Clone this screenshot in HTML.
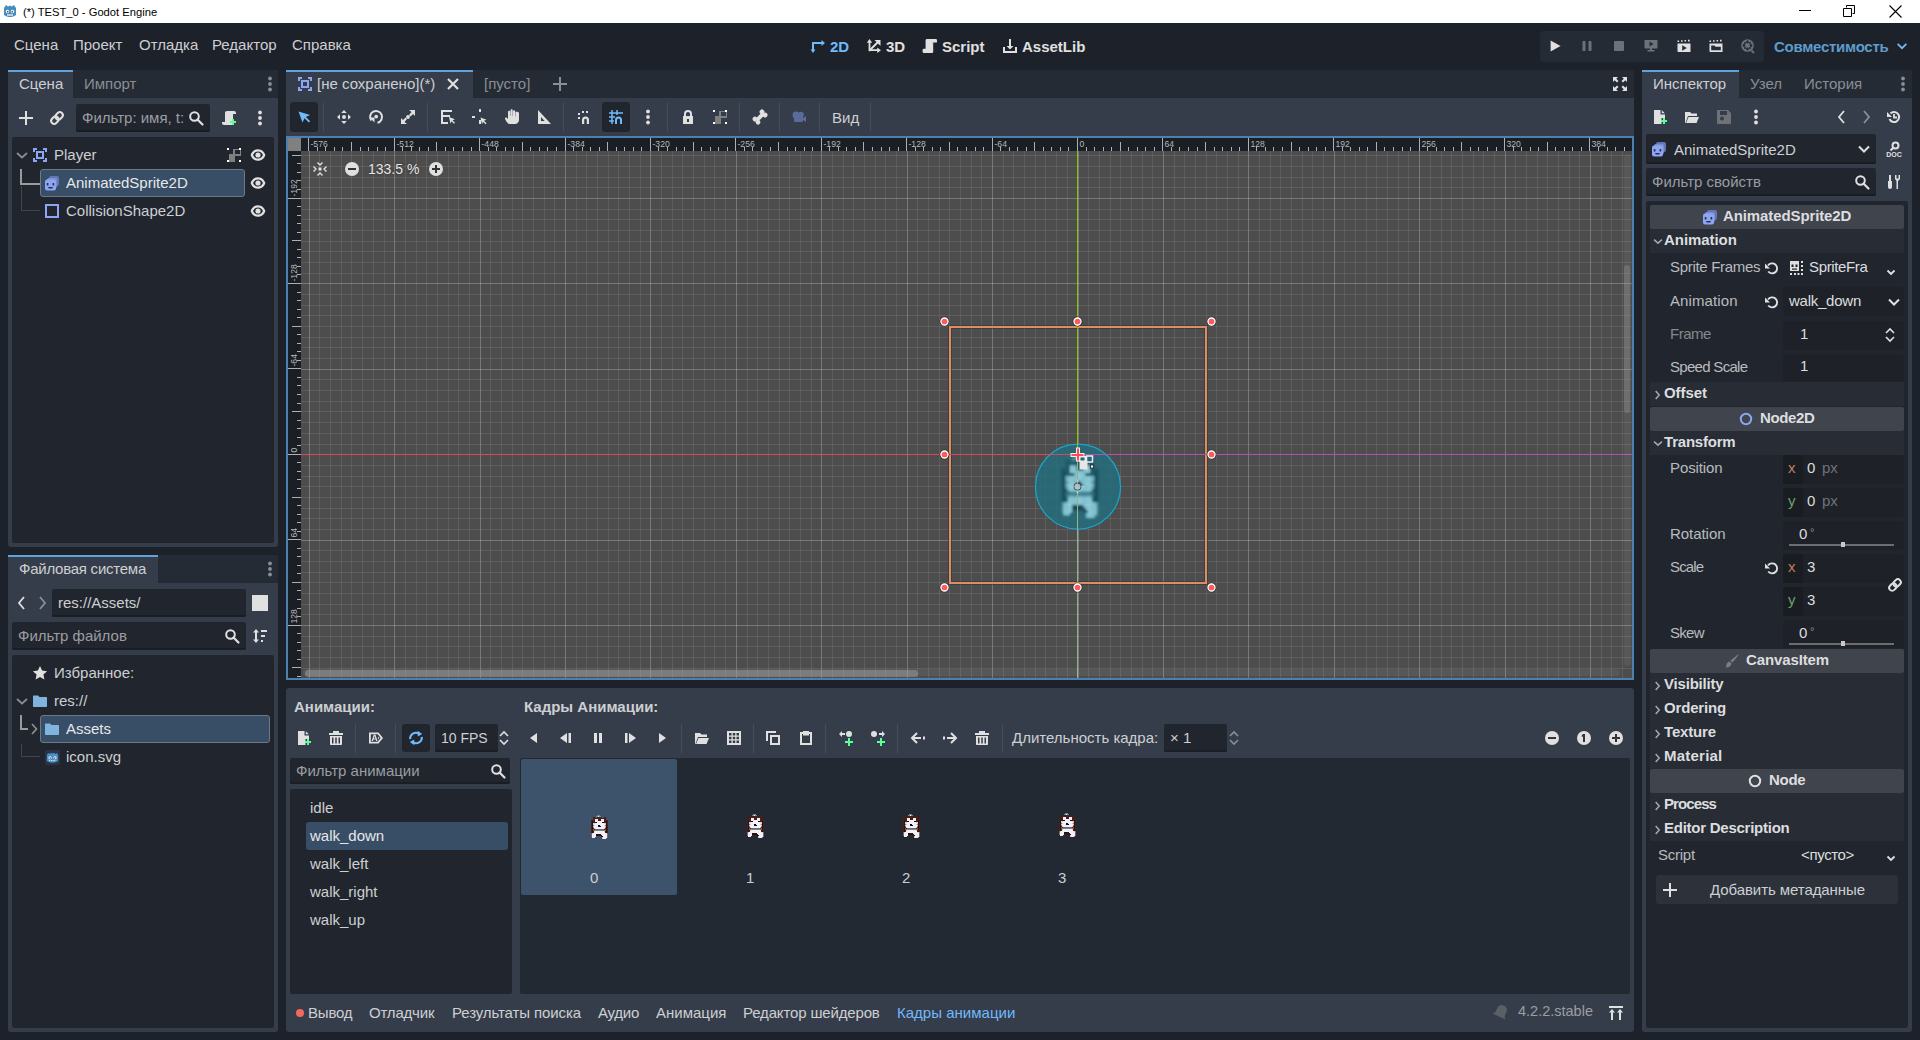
<!DOCTYPE html>
<html><head><meta charset="utf-8"><title>Godot</title>
<style>
html,body{margin:0;padding:0}
body{width:1920px;height:1040px;overflow:hidden;position:relative;background:#1d2129;font-family:"Liberation Sans",sans-serif;font-size:15px;color:#cdcfd2}
.a{position:absolute;box-sizing:border-box}
.t{position:absolute;white-space:nowrap;line-height:1}
svg.a{overflow:visible}
</style></head><body>
<div class="a" style="left:0px;top:0px;width:1920px;height:23px;background:#ffffff;"></div>
<div class="t" style="left:23px;top:6.52px;font-size:11.2px;color:#000;">(*) TEST_0 - Godot Engine</div>
<div class="a" style="left:1799px;top:10px;width:12px;height:1px;background:#000;"></div>
<svg class="a" style="left:1843px;top:5px;" width="12" height="12" viewBox="0 0 12 12"><path d="M3.5 2.5 V0.5 H11.5 V8.5 H9.5 M0.5 3.5 H8.5 V11.5 H0.5 Z" fill="none" stroke="#000" stroke-width="1"/></svg>
<svg class="a" style="left:1889px;top:5px;" width="13" height="13" viewBox="0 0 13 13"><path d="M0.5 0.5 L12.5 12.5 M12.5 0.5 L0.5 12.5" stroke="#000" stroke-width="1.1"/></svg>
<div class="t" style="left:14px;top:37.30px;font-size:15px;color:#cdcfd2;">Сцена</div>
<div class="t" style="left:73px;top:37.30px;font-size:15px;color:#cdcfd2;">Проект</div>
<div class="t" style="left:139px;top:37.30px;font-size:15px;color:#cdcfd2;">Отладка</div>
<div class="t" style="left:212px;top:37.30px;font-size:15px;color:#cdcfd2;">Редактор</div>
<div class="t" style="left:292px;top:37.30px;font-size:15px;color:#cdcfd2;">Справка</div>
<div class="t" style="left:830px;top:39.30px;font-size:15px;color:#70bafa;font-weight:700;">2D</div>
<div class="t" style="left:886px;top:39.30px;font-size:15px;color:#e0e0e0;font-weight:700;">3D</div>
<div class="t" style="left:942px;top:39.30px;font-size:15px;color:#e0e0e0;font-weight:700;">Script</div>
<div class="t" style="left:1022px;top:39.30px;font-size:15px;color:#e0e0e0;font-weight:700;">AssetLib</div>
<div class="a" style="left:1540px;top:31px;width:224px;height:31px;background:#252b34;border-radius:4px"></div>
<div class="t" style="left:1774px;top:39.30px;font-size:15px;color:#5d9ccb;font-weight:700;letter-spacing:-0.266px;">Совместимость</div>
<div class="a" style="left:8px;top:70px;width:270px;height:477px;background:#363d4a;border-radius:3px"></div>
<div class="a" style="left:73px;top:70px;width:205px;height:28px;background:#252b34;border-radius:0 3px 0 0"></div>
<div class="a" style="left:8px;top:70px;width:65px;height:2px;background:#5fa3da;"></div>
<div class="t" style="left:19px;top:76.30px;font-size:15px;color:#cdcfd2;">Сцена</div>
<div class="t" style="left:84px;top:76.30px;font-size:15px;color:#8a8e94;">Импорт</div>
<div class="a" style="left:76px;top:104px;width:134px;height:28px;background:#21262e;border-radius:2px;box-shadow:inset 0 -2px 0 #1a1d23"></div>
<div class="t" style="left:82px;top:110.30px;font-size:15px;color:#9a9da2;">Фильтр: имя, t:</div>
<div class="a" style="left:12px;top:137px;width:262px;height:406px;background:#21262e;border-radius:2px"></div>
<div class="t" style="left:54px;top:147.30px;font-size:15px;color:#cdcfd2;">Player</div>
<div class="a" style="left:40px;top:169px;width:205px;height:28px;background:#374e66;border:1px solid #6d7986;border-radius:3px"></div>
<div class="t" style="left:66px;top:175.30px;font-size:15px;color:#e6e7e9;">AnimatedSprite2D</div>
<div class="t" style="left:66px;top:203.30px;font-size:15px;color:#cdcfd2;">CollisionShape2D</div>
<div class="a" style="left:8px;top:555px;width:270px;height:477px;background:#363d4a;border-radius:3px"></div>
<div class="a" style="left:158px;top:555px;width:120px;height:28px;background:#252b34;border-radius:0 3px 0 0"></div>
<div class="a" style="left:8px;top:555px;width:150px;height:2px;background:#5fa3da;"></div>
<div class="t" style="left:19px;top:561.30px;font-size:15px;color:#cdcfd2;letter-spacing:-0.244px;">Файловая система</div>
<div class="a" style="left:52px;top:589px;width:194px;height:28px;background:#21262e;border-radius:2px;box-shadow:inset 0 -2px 0 #1a1d23"></div>
<div class="t" style="left:58px;top:595.30px;font-size:15px;color:#cdcfd2;">res://Assets/</div>
<div class="a" style="left:12px;top:622px;width:234px;height:28px;background:#21262e;border-radius:2px;box-shadow:inset 0 -2px 0 #1a1d23"></div>
<div class="t" style="left:18px;top:628.30px;font-size:15px;color:#9a9da2;">Фильтр файлов</div>
<div class="a" style="left:12px;top:655px;width:262px;height:373px;background:#21262e;border-radius:2px"></div>
<div class="t" style="left:54px;top:665.30px;font-size:15px;color:#cdcfd2;">Избранное:</div>
<div class="t" style="left:54px;top:693.30px;font-size:15px;color:#cdcfd2;">res://</div>
<div class="a" style="left:40px;top:715px;width:230px;height:28px;background:#374e66;border:1px solid #6d7986;border-radius:3px"></div>
<div class="t" style="left:66px;top:721.30px;font-size:15px;color:#e6e7e9;">Assets</div>
<div class="t" style="left:66px;top:749.30px;font-size:15px;color:#cdcfd2;">icon.svg</div>
<div class="a" style="left:286px;top:70px;width:1348px;height:610px;background:#363d4a;border-radius:3px"></div>
<div class="a" style="left:473px;top:70px;width:1161px;height:28px;background:#252b34;border-radius:0 3px 0 0"></div>
<div class="a" style="left:286px;top:70px;width:187px;height:2px;background:#5fa3da;"></div>
<div class="t" style="left:317px;top:76.30px;font-size:15px;color:#cdcfd2;">[не сохранено](*)</div>
<div class="t" style="left:484px;top:76.30px;font-size:15px;color:#8a8e94;">[пусто]</div>
<div class="a" style="left:286px;top:136px;width:1348px;height:544px;background:#4c80ae;"></div>
<div class="a" style="left:288px;top:138px;width:1344px;height:540px;background:#1a1e25;"></div>
<div class="a" style="left:301px;top:151px;width:1331px;height:527px;background:#4d4d4d;"></div>
<div class="a" style="left:288px;top:138px;width:13px;height:13px;background:#808080;"></div>
<svg class="a" style="left:301px;top:151px;overflow:hidden" width="1331" height="527"><line x1="8.5" y1="0" x2="8.5" y2="527" stroke="#fff" stroke-opacity="0.24" stroke-width="1"/><line x1="18.5" y1="0" x2="18.5" y2="527" stroke="#fff" stroke-opacity="0.09" stroke-width="1"/><line x1="29.5" y1="0" x2="29.5" y2="527" stroke="#fff" stroke-opacity="0.09" stroke-width="1"/><line x1="40.5" y1="0" x2="40.5" y2="527" stroke="#fff" stroke-opacity="0.09" stroke-width="1"/><line x1="50.5" y1="0" x2="50.5" y2="527" stroke="#fff" stroke-opacity="0.09" stroke-width="1"/><line x1="61.5" y1="0" x2="61.5" y2="527" stroke="#fff" stroke-opacity="0.09" stroke-width="1"/><line x1="72.5" y1="0" x2="72.5" y2="527" stroke="#fff" stroke-opacity="0.09" stroke-width="1"/><line x1="83.5" y1="0" x2="83.5" y2="527" stroke="#fff" stroke-opacity="0.09" stroke-width="1"/><line x1="93.5" y1="0" x2="93.5" y2="527" stroke="#fff" stroke-opacity="0.24" stroke-width="1"/><line x1="104.5" y1="0" x2="104.5" y2="527" stroke="#fff" stroke-opacity="0.09" stroke-width="1"/><line x1="115.5" y1="0" x2="115.5" y2="527" stroke="#fff" stroke-opacity="0.09" stroke-width="1"/><line x1="125.5" y1="0" x2="125.5" y2="527" stroke="#fff" stroke-opacity="0.09" stroke-width="1"/><line x1="136.5" y1="0" x2="136.5" y2="527" stroke="#fff" stroke-opacity="0.09" stroke-width="1"/><line x1="147.5" y1="0" x2="147.5" y2="527" stroke="#fff" stroke-opacity="0.09" stroke-width="1"/><line x1="157.5" y1="0" x2="157.5" y2="527" stroke="#fff" stroke-opacity="0.09" stroke-width="1"/><line x1="168.5" y1="0" x2="168.5" y2="527" stroke="#fff" stroke-opacity="0.09" stroke-width="1"/><line x1="179.5" y1="0" x2="179.5" y2="527" stroke="#fff" stroke-opacity="0.24" stroke-width="1"/><line x1="189.5" y1="0" x2="189.5" y2="527" stroke="#fff" stroke-opacity="0.09" stroke-width="1"/><line x1="200.5" y1="0" x2="200.5" y2="527" stroke="#fff" stroke-opacity="0.09" stroke-width="1"/><line x1="211.5" y1="0" x2="211.5" y2="527" stroke="#fff" stroke-opacity="0.09" stroke-width="1"/><line x1="221.5" y1="0" x2="221.5" y2="527" stroke="#fff" stroke-opacity="0.09" stroke-width="1"/><line x1="232.5" y1="0" x2="232.5" y2="527" stroke="#fff" stroke-opacity="0.09" stroke-width="1"/><line x1="243.5" y1="0" x2="243.5" y2="527" stroke="#fff" stroke-opacity="0.09" stroke-width="1"/><line x1="253.5" y1="0" x2="253.5" y2="527" stroke="#fff" stroke-opacity="0.09" stroke-width="1"/><line x1="264.5" y1="0" x2="264.5" y2="527" stroke="#fff" stroke-opacity="0.24" stroke-width="1"/><line x1="275.5" y1="0" x2="275.5" y2="527" stroke="#fff" stroke-opacity="0.09" stroke-width="1"/><line x1="285.5" y1="0" x2="285.5" y2="527" stroke="#fff" stroke-opacity="0.09" stroke-width="1"/><line x1="296.5" y1="0" x2="296.5" y2="527" stroke="#fff" stroke-opacity="0.09" stroke-width="1"/><line x1="307.5" y1="0" x2="307.5" y2="527" stroke="#fff" stroke-opacity="0.09" stroke-width="1"/><line x1="317.5" y1="0" x2="317.5" y2="527" stroke="#fff" stroke-opacity="0.09" stroke-width="1"/><line x1="328.5" y1="0" x2="328.5" y2="527" stroke="#fff" stroke-opacity="0.09" stroke-width="1"/><line x1="339.5" y1="0" x2="339.5" y2="527" stroke="#fff" stroke-opacity="0.09" stroke-width="1"/><line x1="349.5" y1="0" x2="349.5" y2="527" stroke="#fff" stroke-opacity="0.24" stroke-width="1"/><line x1="360.5" y1="0" x2="360.5" y2="527" stroke="#fff" stroke-opacity="0.09" stroke-width="1"/><line x1="371.5" y1="0" x2="371.5" y2="527" stroke="#fff" stroke-opacity="0.09" stroke-width="1"/><line x1="381.5" y1="0" x2="381.5" y2="527" stroke="#fff" stroke-opacity="0.09" stroke-width="1"/><line x1="392.5" y1="0" x2="392.5" y2="527" stroke="#fff" stroke-opacity="0.09" stroke-width="1"/><line x1="403.5" y1="0" x2="403.5" y2="527" stroke="#fff" stroke-opacity="0.09" stroke-width="1"/><line x1="413.5" y1="0" x2="413.5" y2="527" stroke="#fff" stroke-opacity="0.09" stroke-width="1"/><line x1="424.5" y1="0" x2="424.5" y2="527" stroke="#fff" stroke-opacity="0.09" stroke-width="1"/><line x1="435.5" y1="0" x2="435.5" y2="527" stroke="#fff" stroke-opacity="0.24" stroke-width="1"/><line x1="446.5" y1="0" x2="446.5" y2="527" stroke="#fff" stroke-opacity="0.09" stroke-width="1"/><line x1="456.5" y1="0" x2="456.5" y2="527" stroke="#fff" stroke-opacity="0.09" stroke-width="1"/><line x1="467.5" y1="0" x2="467.5" y2="527" stroke="#fff" stroke-opacity="0.09" stroke-width="1"/><line x1="478.5" y1="0" x2="478.5" y2="527" stroke="#fff" stroke-opacity="0.09" stroke-width="1"/><line x1="488.5" y1="0" x2="488.5" y2="527" stroke="#fff" stroke-opacity="0.09" stroke-width="1"/><line x1="499.5" y1="0" x2="499.5" y2="527" stroke="#fff" stroke-opacity="0.09" stroke-width="1"/><line x1="510.5" y1="0" x2="510.5" y2="527" stroke="#fff" stroke-opacity="0.09" stroke-width="1"/><line x1="520.5" y1="0" x2="520.5" y2="527" stroke="#fff" stroke-opacity="0.24" stroke-width="1"/><line x1="531.5" y1="0" x2="531.5" y2="527" stroke="#fff" stroke-opacity="0.09" stroke-width="1"/><line x1="542.5" y1="0" x2="542.5" y2="527" stroke="#fff" stroke-opacity="0.09" stroke-width="1"/><line x1="552.5" y1="0" x2="552.5" y2="527" stroke="#fff" stroke-opacity="0.09" stroke-width="1"/><line x1="563.5" y1="0" x2="563.5" y2="527" stroke="#fff" stroke-opacity="0.09" stroke-width="1"/><line x1="574.5" y1="0" x2="574.5" y2="527" stroke="#fff" stroke-opacity="0.09" stroke-width="1"/><line x1="584.5" y1="0" x2="584.5" y2="527" stroke="#fff" stroke-opacity="0.09" stroke-width="1"/><line x1="595.5" y1="0" x2="595.5" y2="527" stroke="#fff" stroke-opacity="0.09" stroke-width="1"/><line x1="606.5" y1="0" x2="606.5" y2="527" stroke="#fff" stroke-opacity="0.24" stroke-width="1"/><line x1="616.5" y1="0" x2="616.5" y2="527" stroke="#fff" stroke-opacity="0.09" stroke-width="1"/><line x1="627.5" y1="0" x2="627.5" y2="527" stroke="#fff" stroke-opacity="0.09" stroke-width="1"/><line x1="638.5" y1="0" x2="638.5" y2="527" stroke="#fff" stroke-opacity="0.09" stroke-width="1"/><line x1="648.5" y1="0" x2="648.5" y2="527" stroke="#fff" stroke-opacity="0.09" stroke-width="1"/><line x1="659.5" y1="0" x2="659.5" y2="527" stroke="#fff" stroke-opacity="0.09" stroke-width="1"/><line x1="670.5" y1="0" x2="670.5" y2="527" stroke="#fff" stroke-opacity="0.09" stroke-width="1"/><line x1="680.5" y1="0" x2="680.5" y2="527" stroke="#fff" stroke-opacity="0.09" stroke-width="1"/><line x1="691.5" y1="0" x2="691.5" y2="527" stroke="#fff" stroke-opacity="0.24" stroke-width="1"/><line x1="702.5" y1="0" x2="702.5" y2="527" stroke="#fff" stroke-opacity="0.09" stroke-width="1"/><line x1="712.5" y1="0" x2="712.5" y2="527" stroke="#fff" stroke-opacity="0.09" stroke-width="1"/><line x1="723.5" y1="0" x2="723.5" y2="527" stroke="#fff" stroke-opacity="0.09" stroke-width="1"/><line x1="734.5" y1="0" x2="734.5" y2="527" stroke="#fff" stroke-opacity="0.09" stroke-width="1"/><line x1="744.5" y1="0" x2="744.5" y2="527" stroke="#fff" stroke-opacity="0.09" stroke-width="1"/><line x1="755.5" y1="0" x2="755.5" y2="527" stroke="#fff" stroke-opacity="0.09" stroke-width="1"/><line x1="766.5" y1="0" x2="766.5" y2="527" stroke="#fff" stroke-opacity="0.09" stroke-width="1"/><line x1="777.5" y1="0" x2="777.5" y2="527" stroke="#fff" stroke-opacity="0.24" stroke-width="1"/><line x1="787.5" y1="0" x2="787.5" y2="527" stroke="#fff" stroke-opacity="0.09" stroke-width="1"/><line x1="798.5" y1="0" x2="798.5" y2="527" stroke="#fff" stroke-opacity="0.09" stroke-width="1"/><line x1="809.5" y1="0" x2="809.5" y2="527" stroke="#fff" stroke-opacity="0.09" stroke-width="1"/><line x1="819.5" y1="0" x2="819.5" y2="527" stroke="#fff" stroke-opacity="0.09" stroke-width="1"/><line x1="830.5" y1="0" x2="830.5" y2="527" stroke="#fff" stroke-opacity="0.09" stroke-width="1"/><line x1="841.5" y1="0" x2="841.5" y2="527" stroke="#fff" stroke-opacity="0.09" stroke-width="1"/><line x1="851.5" y1="0" x2="851.5" y2="527" stroke="#fff" stroke-opacity="0.09" stroke-width="1"/><line x1="862.5" y1="0" x2="862.5" y2="527" stroke="#fff" stroke-opacity="0.24" stroke-width="1"/><line x1="873.5" y1="0" x2="873.5" y2="527" stroke="#fff" stroke-opacity="0.09" stroke-width="1"/><line x1="883.5" y1="0" x2="883.5" y2="527" stroke="#fff" stroke-opacity="0.09" stroke-width="1"/><line x1="894.5" y1="0" x2="894.5" y2="527" stroke="#fff" stroke-opacity="0.09" stroke-width="1"/><line x1="905.5" y1="0" x2="905.5" y2="527" stroke="#fff" stroke-opacity="0.09" stroke-width="1"/><line x1="915.5" y1="0" x2="915.5" y2="527" stroke="#fff" stroke-opacity="0.09" stroke-width="1"/><line x1="926.5" y1="0" x2="926.5" y2="527" stroke="#fff" stroke-opacity="0.09" stroke-width="1"/><line x1="937.5" y1="0" x2="937.5" y2="527" stroke="#fff" stroke-opacity="0.09" stroke-width="1"/><line x1="947.5" y1="0" x2="947.5" y2="527" stroke="#fff" stroke-opacity="0.24" stroke-width="1"/><line x1="958.5" y1="0" x2="958.5" y2="527" stroke="#fff" stroke-opacity="0.09" stroke-width="1"/><line x1="969.5" y1="0" x2="969.5" y2="527" stroke="#fff" stroke-opacity="0.09" stroke-width="1"/><line x1="979.5" y1="0" x2="979.5" y2="527" stroke="#fff" stroke-opacity="0.09" stroke-width="1"/><line x1="990.5" y1="0" x2="990.5" y2="527" stroke="#fff" stroke-opacity="0.09" stroke-width="1"/><line x1="1001.5" y1="0" x2="1001.5" y2="527" stroke="#fff" stroke-opacity="0.09" stroke-width="1"/><line x1="1011.5" y1="0" x2="1011.5" y2="527" stroke="#fff" stroke-opacity="0.09" stroke-width="1"/><line x1="1022.5" y1="0" x2="1022.5" y2="527" stroke="#fff" stroke-opacity="0.09" stroke-width="1"/><line x1="1033.5" y1="0" x2="1033.5" y2="527" stroke="#fff" stroke-opacity="0.24" stroke-width="1"/><line x1="1043.5" y1="0" x2="1043.5" y2="527" stroke="#fff" stroke-opacity="0.09" stroke-width="1"/><line x1="1054.5" y1="0" x2="1054.5" y2="527" stroke="#fff" stroke-opacity="0.09" stroke-width="1"/><line x1="1065.5" y1="0" x2="1065.5" y2="527" stroke="#fff" stroke-opacity="0.09" stroke-width="1"/><line x1="1075.5" y1="0" x2="1075.5" y2="527" stroke="#fff" stroke-opacity="0.09" stroke-width="1"/><line x1="1086.5" y1="0" x2="1086.5" y2="527" stroke="#fff" stroke-opacity="0.09" stroke-width="1"/><line x1="1097.5" y1="0" x2="1097.5" y2="527" stroke="#fff" stroke-opacity="0.09" stroke-width="1"/><line x1="1107.5" y1="0" x2="1107.5" y2="527" stroke="#fff" stroke-opacity="0.09" stroke-width="1"/><line x1="1118.5" y1="0" x2="1118.5" y2="527" stroke="#fff" stroke-opacity="0.24" stroke-width="1"/><line x1="1129.5" y1="0" x2="1129.5" y2="527" stroke="#fff" stroke-opacity="0.09" stroke-width="1"/><line x1="1140.5" y1="0" x2="1140.5" y2="527" stroke="#fff" stroke-opacity="0.09" stroke-width="1"/><line x1="1150.5" y1="0" x2="1150.5" y2="527" stroke="#fff" stroke-opacity="0.09" stroke-width="1"/><line x1="1161.5" y1="0" x2="1161.5" y2="527" stroke="#fff" stroke-opacity="0.09" stroke-width="1"/><line x1="1172.5" y1="0" x2="1172.5" y2="527" stroke="#fff" stroke-opacity="0.09" stroke-width="1"/><line x1="1182.5" y1="0" x2="1182.5" y2="527" stroke="#fff" stroke-opacity="0.09" stroke-width="1"/><line x1="1193.5" y1="0" x2="1193.5" y2="527" stroke="#fff" stroke-opacity="0.09" stroke-width="1"/><line x1="1204.5" y1="0" x2="1204.5" y2="527" stroke="#fff" stroke-opacity="0.24" stroke-width="1"/><line x1="1214.5" y1="0" x2="1214.5" y2="527" stroke="#fff" stroke-opacity="0.09" stroke-width="1"/><line x1="1225.5" y1="0" x2="1225.5" y2="527" stroke="#fff" stroke-opacity="0.09" stroke-width="1"/><line x1="1236.5" y1="0" x2="1236.5" y2="527" stroke="#fff" stroke-opacity="0.09" stroke-width="1"/><line x1="1246.5" y1="0" x2="1246.5" y2="527" stroke="#fff" stroke-opacity="0.09" stroke-width="1"/><line x1="1257.5" y1="0" x2="1257.5" y2="527" stroke="#fff" stroke-opacity="0.09" stroke-width="1"/><line x1="1268.5" y1="0" x2="1268.5" y2="527" stroke="#fff" stroke-opacity="0.09" stroke-width="1"/><line x1="1278.5" y1="0" x2="1278.5" y2="527" stroke="#fff" stroke-opacity="0.09" stroke-width="1"/><line x1="1289.5" y1="0" x2="1289.5" y2="527" stroke="#fff" stroke-opacity="0.24" stroke-width="1"/><line x1="1300.5" y1="0" x2="1300.5" y2="527" stroke="#fff" stroke-opacity="0.09" stroke-width="1"/><line x1="1310.5" y1="0" x2="1310.5" y2="527" stroke="#fff" stroke-opacity="0.09" stroke-width="1"/><line x1="1321.5" y1="0" x2="1321.5" y2="527" stroke="#fff" stroke-opacity="0.09" stroke-width="1"/><line x1="0" y1="4.5" x2="1331" y2="4.5" stroke="#fff" stroke-opacity="0.09" stroke-width="1"/><line x1="0" y1="15.5" x2="1331" y2="15.5" stroke="#fff" stroke-opacity="0.09" stroke-width="1"/><line x1="0" y1="26.5" x2="1331" y2="26.5" stroke="#fff" stroke-opacity="0.09" stroke-width="1"/><line x1="0" y1="36.5" x2="1331" y2="36.5" stroke="#fff" stroke-opacity="0.09" stroke-width="1"/><line x1="0" y1="47.5" x2="1331" y2="47.5" stroke="#fff" stroke-opacity="0.24" stroke-width="1"/><line x1="0" y1="58.5" x2="1331" y2="58.5" stroke="#fff" stroke-opacity="0.09" stroke-width="1"/><line x1="0" y1="68.5" x2="1331" y2="68.5" stroke="#fff" stroke-opacity="0.09" stroke-width="1"/><line x1="0" y1="79.5" x2="1331" y2="79.5" stroke="#fff" stroke-opacity="0.09" stroke-width="1"/><line x1="0" y1="90.5" x2="1331" y2="90.5" stroke="#fff" stroke-opacity="0.09" stroke-width="1"/><line x1="0" y1="100.5" x2="1331" y2="100.5" stroke="#fff" stroke-opacity="0.09" stroke-width="1"/><line x1="0" y1="111.5" x2="1331" y2="111.5" stroke="#fff" stroke-opacity="0.09" stroke-width="1"/><line x1="0" y1="122.5" x2="1331" y2="122.5" stroke="#fff" stroke-opacity="0.09" stroke-width="1"/><line x1="0" y1="132.5" x2="1331" y2="132.5" stroke="#fff" stroke-opacity="0.24" stroke-width="1"/><line x1="0" y1="143.5" x2="1331" y2="143.5" stroke="#fff" stroke-opacity="0.09" stroke-width="1"/><line x1="0" y1="154.5" x2="1331" y2="154.5" stroke="#fff" stroke-opacity="0.09" stroke-width="1"/><line x1="0" y1="164.5" x2="1331" y2="164.5" stroke="#fff" stroke-opacity="0.09" stroke-width="1"/><line x1="0" y1="175.5" x2="1331" y2="175.5" stroke="#fff" stroke-opacity="0.09" stroke-width="1"/><line x1="0" y1="186.5" x2="1331" y2="186.5" stroke="#fff" stroke-opacity="0.09" stroke-width="1"/><line x1="0" y1="196.5" x2="1331" y2="196.5" stroke="#fff" stroke-opacity="0.09" stroke-width="1"/><line x1="0" y1="207.5" x2="1331" y2="207.5" stroke="#fff" stroke-opacity="0.09" stroke-width="1"/><line x1="0" y1="218.5" x2="1331" y2="218.5" stroke="#fff" stroke-opacity="0.24" stroke-width="1"/><line x1="0" y1="228.5" x2="1331" y2="228.5" stroke="#fff" stroke-opacity="0.09" stroke-width="1"/><line x1="0" y1="239.5" x2="1331" y2="239.5" stroke="#fff" stroke-opacity="0.09" stroke-width="1"/><line x1="0" y1="250.5" x2="1331" y2="250.5" stroke="#fff" stroke-opacity="0.09" stroke-width="1"/><line x1="0" y1="260.5" x2="1331" y2="260.5" stroke="#fff" stroke-opacity="0.09" stroke-width="1"/><line x1="0" y1="271.5" x2="1331" y2="271.5" stroke="#fff" stroke-opacity="0.09" stroke-width="1"/><line x1="0" y1="282.5" x2="1331" y2="282.5" stroke="#fff" stroke-opacity="0.09" stroke-width="1"/><line x1="0" y1="293.5" x2="1331" y2="293.5" stroke="#fff" stroke-opacity="0.09" stroke-width="1"/><line x1="0" y1="303.5" x2="1331" y2="303.5" stroke="#fff" stroke-opacity="0.24" stroke-width="1"/><line x1="0" y1="314.5" x2="1331" y2="314.5" stroke="#fff" stroke-opacity="0.09" stroke-width="1"/><line x1="0" y1="325.5" x2="1331" y2="325.5" stroke="#fff" stroke-opacity="0.09" stroke-width="1"/><line x1="0" y1="335.5" x2="1331" y2="335.5" stroke="#fff" stroke-opacity="0.09" stroke-width="1"/><line x1="0" y1="346.5" x2="1331" y2="346.5" stroke="#fff" stroke-opacity="0.09" stroke-width="1"/><line x1="0" y1="357.5" x2="1331" y2="357.5" stroke="#fff" stroke-opacity="0.09" stroke-width="1"/><line x1="0" y1="367.5" x2="1331" y2="367.5" stroke="#fff" stroke-opacity="0.09" stroke-width="1"/><line x1="0" y1="378.5" x2="1331" y2="378.5" stroke="#fff" stroke-opacity="0.09" stroke-width="1"/><line x1="0" y1="389.5" x2="1331" y2="389.5" stroke="#fff" stroke-opacity="0.24" stroke-width="1"/><line x1="0" y1="399.5" x2="1331" y2="399.5" stroke="#fff" stroke-opacity="0.09" stroke-width="1"/><line x1="0" y1="410.5" x2="1331" y2="410.5" stroke="#fff" stroke-opacity="0.09" stroke-width="1"/><line x1="0" y1="421.5" x2="1331" y2="421.5" stroke="#fff" stroke-opacity="0.09" stroke-width="1"/><line x1="0" y1="431.5" x2="1331" y2="431.5" stroke="#fff" stroke-opacity="0.09" stroke-width="1"/><line x1="0" y1="442.5" x2="1331" y2="442.5" stroke="#fff" stroke-opacity="0.09" stroke-width="1"/><line x1="0" y1="453.5" x2="1331" y2="453.5" stroke="#fff" stroke-opacity="0.09" stroke-width="1"/><line x1="0" y1="463.5" x2="1331" y2="463.5" stroke="#fff" stroke-opacity="0.09" stroke-width="1"/><line x1="0" y1="474.5" x2="1331" y2="474.5" stroke="#fff" stroke-opacity="0.24" stroke-width="1"/><line x1="0" y1="485.5" x2="1331" y2="485.5" stroke="#fff" stroke-opacity="0.09" stroke-width="1"/><line x1="0" y1="495.5" x2="1331" y2="495.5" stroke="#fff" stroke-opacity="0.09" stroke-width="1"/><line x1="0" y1="506.5" x2="1331" y2="506.5" stroke="#fff" stroke-opacity="0.09" stroke-width="1"/><line x1="0" y1="517.5" x2="1331" y2="517.5" stroke="#fff" stroke-opacity="0.09" stroke-width="1"/><rect x="649" y="176" width="256" height="256" fill="none" stroke="#263238" stroke-opacity="0.5" stroke-width="4"/><rect x="649" y="176" width="256" height="256" fill="none" stroke="#e08c5e" stroke-width="2"/><circle cx="777" cy="335.6" r="42.5" fill="#246d7d" fill-opacity="0.85" stroke="#1aa6cc" stroke-width="1.2"/><defs><filter id="bl" x="-20%" y="-20%" width="140%" height="140%"><feGaussianBlur stdDeviation="1.3"/></filter><clipPath id="cc"><circle cx="777" cy="335.6" r="42"/></clipPath></defs><g clip-path="url(#cc)"><g filter="url(#bl)" opacity="0.9"><g transform="translate(760,304) scale(2.2353,2.6250)"><rect x="6" y="0" width="1.05" height="1.05" fill="#5a9fb0"/><rect x="7" y="0" width="1.05" height="1.05" fill="#5a9fb0"/><rect x="8" y="0" width="1.05" height="1.05" fill="#5a9fb0"/><rect x="5" y="1" width="1.05" height="1.05" fill="#5a9fb0"/><rect x="6" y="1" width="1.05" height="1.05" fill="#5a9fb0"/><rect x="7" y="1" width="1.05" height="1.05" fill="#9ad8e6"/><rect x="8" y="1" width="1.05" height="1.05" fill="#5a9fb0"/><rect x="9" y="1" width="1.05" height="1.05" fill="#5a9fb0"/><rect x="2" y="2" width="1.05" height="1.05" fill="#1f5866"/><rect x="3" y="2" width="1.05" height="1.05" fill="#1f5866"/><rect x="6" y="2" width="1.05" height="1.05" fill="#1f5866"/><rect x="7" y="2" width="1.05" height="1.05" fill="#1f5866"/><rect x="8" y="2" width="1.05" height="1.05" fill="#1f5866"/><rect x="9" y="2" width="1.05" height="1.05" fill="#1f5866"/><rect x="13" y="2" width="1.05" height="1.05" fill="#1f5866"/><rect x="14" y="2" width="1.05" height="1.05" fill="#1f5866"/><rect x="2" y="3" width="1.05" height="1.05" fill="#1f5866"/><rect x="3" y="3" width="1.05" height="1.05" fill="#1f5866"/><rect x="4" y="3" width="1.05" height="1.05" fill="#1f5866"/><rect x="5" y="3" width="1.05" height="1.05" fill="#1f5866"/><rect x="6" y="3" width="1.05" height="1.05" fill="#1f5866"/><rect x="7" y="3" width="1.05" height="1.05" fill="#1f5866"/><rect x="8" y="3" width="1.05" height="1.05" fill="#1f5866"/><rect x="9" y="3" width="1.05" height="1.05" fill="#1f5866"/><rect x="10" y="3" width="1.05" height="1.05" fill="#1f5866"/><rect x="11" y="3" width="1.05" height="1.05" fill="#1f5866"/><rect x="12" y="3" width="1.05" height="1.05" fill="#1f5866"/><rect x="13" y="3" width="1.05" height="1.05" fill="#1f5866"/><rect x="14" y="3" width="1.05" height="1.05" fill="#1f5866"/><rect x="2" y="4" width="1.05" height="1.05" fill="#1f5866"/><rect x="3" y="4" width="1.05" height="1.05" fill="#1f5866"/><rect x="4" y="4" width="1.05" height="1.05" fill="#9ad8e6"/><rect x="5" y="4" width="1.05" height="1.05" fill="#9ad8e6"/><rect x="6" y="4" width="1.05" height="1.05" fill="#9ad8e6"/><rect x="7" y="4" width="1.05" height="1.05" fill="#1f5866"/><rect x="8" y="4" width="1.05" height="1.05" fill="#1f5866"/><rect x="9" y="4" width="1.05" height="1.05" fill="#1f5866"/><rect x="10" y="4" width="1.05" height="1.05" fill="#9ad8e6"/><rect x="11" y="4" width="1.05" height="1.05" fill="#9ad8e6"/><rect x="12" y="4" width="1.05" height="1.05" fill="#9ad8e6"/><rect x="13" y="4" width="1.05" height="1.05" fill="#1f5866"/><rect x="14" y="4" width="1.05" height="1.05" fill="#1f5866"/><rect x="0" y="5" width="1.05" height="1.05" fill="#1f5866"/><rect x="1" y="5" width="1.05" height="1.05" fill="#1f5866"/><rect x="2" y="5" width="1.05" height="1.05" fill="#1f5866"/><rect x="3" y="5" width="1.05" height="1.05" fill="#1f5866"/><rect x="4" y="5" width="1.05" height="1.05" fill="#9ad8e6"/><rect x="5" y="5" width="1.05" height="1.05" fill="#9ad8e6"/><rect x="6" y="5" width="1.05" height="1.05" fill="#9ad8e6"/><rect x="7" y="5" width="1.05" height="1.05" fill="#1f5866"/><rect x="8" y="5" width="1.05" height="1.05" fill="#1f5866"/><rect x="9" y="5" width="1.05" height="1.05" fill="#1f5866"/><rect x="10" y="5" width="1.05" height="1.05" fill="#9ad8e6"/><rect x="11" y="5" width="1.05" height="1.05" fill="#9ad8e6"/><rect x="12" y="5" width="1.05" height="1.05" fill="#9ad8e6"/><rect x="13" y="5" width="1.05" height="1.05" fill="#1f5866"/><rect x="14" y="5" width="1.05" height="1.05" fill="#1f5866"/><rect x="15" y="5" width="1.05" height="1.05" fill="#1f5866"/><rect x="16" y="5" width="1.05" height="1.05" fill="#1f5866"/><rect x="0" y="6" width="1.05" height="1.05" fill="#1f5866"/><rect x="1" y="6" width="1.05" height="1.05" fill="#17434e"/><rect x="2" y="6" width="1.05" height="1.05" fill="#1f5866"/><rect x="3" y="6" width="1.05" height="1.05" fill="#1f5866"/><rect x="4" y="6" width="1.05" height="1.05" fill="#9ad8e6"/><rect x="5" y="6" width="1.05" height="1.05" fill="#9ad8e6"/><rect x="6" y="6" width="1.05" height="1.05" fill="#9ad8e6"/><rect x="7" y="6" width="1.05" height="1.05" fill="#9ad8e6"/><rect x="8" y="6" width="1.05" height="1.05" fill="#9ad8e6"/><rect x="9" y="6" width="1.05" height="1.05" fill="#9ad8e6"/><rect x="10" y="6" width="1.05" height="1.05" fill="#9ad8e6"/><rect x="11" y="6" width="1.05" height="1.05" fill="#9ad8e6"/><rect x="12" y="6" width="1.05" height="1.05" fill="#9ad8e6"/><rect x="13" y="6" width="1.05" height="1.05" fill="#1f5866"/><rect x="14" y="6" width="1.05" height="1.05" fill="#1f5866"/><rect x="15" y="6" width="1.05" height="1.05" fill="#17434e"/><rect x="16" y="6" width="1.05" height="1.05" fill="#1f5866"/><rect x="0" y="7" width="1.05" height="1.05" fill="#1f5866"/><rect x="1" y="7" width="1.05" height="1.05" fill="#17434e"/><rect x="2" y="7" width="1.05" height="1.05" fill="#1f5866"/><rect x="3" y="7" width="1.05" height="1.05" fill="#1f5866"/><rect x="4" y="7" width="1.05" height="1.05" fill="#0e3a44"/><rect x="5" y="7" width="1.05" height="1.05" fill="#0e3a44"/><rect x="6" y="7" width="1.05" height="1.05" fill="#9ad8e6"/><rect x="7" y="7" width="1.05" height="1.05" fill="#9ad8e6"/><rect x="8" y="7" width="1.05" height="1.05" fill="#9ad8e6"/><rect x="9" y="7" width="1.05" height="1.05" fill="#9ad8e6"/><rect x="10" y="7" width="1.05" height="1.05" fill="#9ad8e6"/><rect x="11" y="7" width="1.05" height="1.05" fill="#0e3a44"/><rect x="12" y="7" width="1.05" height="1.05" fill="#0e3a44"/><rect x="13" y="7" width="1.05" height="1.05" fill="#1f5866"/><rect x="14" y="7" width="1.05" height="1.05" fill="#1f5866"/><rect x="15" y="7" width="1.05" height="1.05" fill="#17434e"/><rect x="16" y="7" width="1.05" height="1.05" fill="#1f5866"/><rect x="0" y="8" width="1.05" height="1.05" fill="#1f5866"/><rect x="1" y="8" width="1.05" height="1.05" fill="#17434e"/><rect x="2" y="8" width="1.05" height="1.05" fill="#7cc0d0"/><rect x="3" y="8" width="1.05" height="1.05" fill="#7cc0d0"/><rect x="4" y="8" width="1.05" height="1.05" fill="#9ad8e6"/><rect x="5" y="8" width="1.05" height="1.05" fill="#9ad8e6"/><rect x="6" y="8" width="1.05" height="1.05" fill="#9ad8e6"/><rect x="7" y="8" width="1.05" height="1.05" fill="#9ad8e6"/><rect x="8" y="8" width="1.05" height="1.05" fill="#9ad8e6"/><rect x="9" y="8" width="1.05" height="1.05" fill="#9ad8e6"/><rect x="10" y="8" width="1.05" height="1.05" fill="#9ad8e6"/><rect x="11" y="8" width="1.05" height="1.05" fill="#9ad8e6"/><rect x="12" y="8" width="1.05" height="1.05" fill="#9ad8e6"/><rect x="13" y="8" width="1.05" height="1.05" fill="#7cc0d0"/><rect x="14" y="8" width="1.05" height="1.05" fill="#7cc0d0"/><rect x="15" y="8" width="1.05" height="1.05" fill="#17434e"/><rect x="16" y="8" width="1.05" height="1.05" fill="#1f5866"/><rect x="0" y="9" width="1.05" height="1.05" fill="#1f5866"/><rect x="1" y="9" width="1.05" height="1.05" fill="#17434e"/><rect x="2" y="9" width="1.05" height="1.05" fill="#7cc0d0"/><rect x="3" y="9" width="1.05" height="1.05" fill="#9ad8e6"/><rect x="4" y="9" width="1.05" height="1.05" fill="#9ad8e6"/><rect x="5" y="9" width="1.05" height="1.05" fill="#9ad8e6"/><rect x="6" y="9" width="1.05" height="1.05" fill="#9ad8e6"/><rect x="7" y="9" width="1.05" height="1.05" fill="#9ad8e6"/><rect x="8" y="9" width="1.05" height="1.05" fill="#9ad8e6"/><rect x="9" y="9" width="1.05" height="1.05" fill="#9ad8e6"/><rect x="10" y="9" width="1.05" height="1.05" fill="#9ad8e6"/><rect x="11" y="9" width="1.05" height="1.05" fill="#9ad8e6"/><rect x="12" y="9" width="1.05" height="1.05" fill="#9ad8e6"/><rect x="13" y="9" width="1.05" height="1.05" fill="#9ad8e6"/><rect x="14" y="9" width="1.05" height="1.05" fill="#7cc0d0"/><rect x="15" y="9" width="1.05" height="1.05" fill="#17434e"/><rect x="16" y="9" width="1.05" height="1.05" fill="#1f5866"/><rect x="0" y="10" width="1.05" height="1.05" fill="#1f5866"/><rect x="1" y="10" width="1.05" height="1.05" fill="#17434e"/><rect x="2" y="10" width="1.05" height="1.05" fill="#5a9fb0"/><rect x="3" y="10" width="1.05" height="1.05" fill="#7cc0d0"/><rect x="4" y="10" width="1.05" height="1.05" fill="#9ad8e6"/><rect x="5" y="10" width="1.05" height="1.05" fill="#9ad8e6"/><rect x="6" y="10" width="1.05" height="1.05" fill="#9ad8e6"/><rect x="7" y="10" width="1.05" height="1.05" fill="#0e3a44"/><rect x="8" y="10" width="1.05" height="1.05" fill="#0e3a44"/><rect x="9" y="10" width="1.05" height="1.05" fill="#9ad8e6"/><rect x="10" y="10" width="1.05" height="1.05" fill="#9ad8e6"/><rect x="11" y="10" width="1.05" height="1.05" fill="#9ad8e6"/><rect x="12" y="10" width="1.05" height="1.05" fill="#9ad8e6"/><rect x="13" y="10" width="1.05" height="1.05" fill="#7cc0d0"/><rect x="14" y="10" width="1.05" height="1.05" fill="#5a9fb0"/><rect x="15" y="10" width="1.05" height="1.05" fill="#17434e"/><rect x="16" y="10" width="1.05" height="1.05" fill="#1f5866"/><rect x="0" y="11" width="1.05" height="1.05" fill="#1f5866"/><rect x="1" y="11" width="1.05" height="1.05" fill="#17434e"/><rect x="2" y="11" width="1.05" height="1.05" fill="#7cc0d0"/><rect x="3" y="11" width="1.05" height="1.05" fill="#9ad8e6"/><rect x="4" y="11" width="1.05" height="1.05" fill="#9ad8e6"/><rect x="5" y="11" width="1.05" height="1.05" fill="#9ad8e6"/><rect x="6" y="11" width="1.05" height="1.05" fill="#9ad8e6"/><rect x="7" y="11" width="1.05" height="1.05" fill="#0e3a44"/><rect x="8" y="11" width="1.05" height="1.05" fill="#0e3a44"/><rect x="9" y="11" width="1.05" height="1.05" fill="#0e3a44"/><rect x="10" y="11" width="1.05" height="1.05" fill="#9ad8e6"/><rect x="11" y="11" width="1.05" height="1.05" fill="#9ad8e6"/><rect x="12" y="11" width="1.05" height="1.05" fill="#9ad8e6"/><rect x="13" y="11" width="1.05" height="1.05" fill="#9ad8e6"/><rect x="14" y="11" width="1.05" height="1.05" fill="#7cc0d0"/><rect x="15" y="11" width="1.05" height="1.05" fill="#17434e"/><rect x="16" y="11" width="1.05" height="1.05" fill="#1f5866"/><rect x="0" y="12" width="1.05" height="1.05" fill="#1f5866"/><rect x="1" y="12" width="1.05" height="1.05" fill="#17434e"/><rect x="2" y="12" width="1.05" height="1.05" fill="#5a9fb0"/><rect x="3" y="12" width="1.05" height="1.05" fill="#9ad8e6"/><rect x="4" y="12" width="1.05" height="1.05" fill="#9ad8e6"/><rect x="5" y="12" width="1.05" height="1.05" fill="#9ad8e6"/><rect x="6" y="12" width="1.05" height="1.05" fill="#9ad8e6"/><rect x="7" y="12" width="1.05" height="1.05" fill="#9ad8e6"/><rect x="8" y="12" width="1.05" height="1.05" fill="#9ad8e6"/><rect x="9" y="12" width="1.05" height="1.05" fill="#9ad8e6"/><rect x="10" y="12" width="1.05" height="1.05" fill="#9ad8e6"/><rect x="11" y="12" width="1.05" height="1.05" fill="#9ad8e6"/><rect x="12" y="12" width="1.05" height="1.05" fill="#9ad8e6"/><rect x="13" y="12" width="1.05" height="1.05" fill="#9ad8e6"/><rect x="14" y="12" width="1.05" height="1.05" fill="#5a9fb0"/><rect x="15" y="12" width="1.05" height="1.05" fill="#17434e"/><rect x="16" y="12" width="1.05" height="1.05" fill="#1f5866"/><rect x="0" y="13" width="1.05" height="1.05" fill="#1f5866"/><rect x="1" y="13" width="1.05" height="1.05" fill="#17434e"/><rect x="2" y="13" width="1.05" height="1.05" fill="#1f5866"/><rect x="3" y="13" width="1.05" height="1.05" fill="#7cc0d0"/><rect x="4" y="13" width="1.05" height="1.05" fill="#9ad8e6"/><rect x="5" y="13" width="1.05" height="1.05" fill="#9ad8e6"/><rect x="6" y="13" width="1.05" height="1.05" fill="#9ad8e6"/><rect x="7" y="13" width="1.05" height="1.05" fill="#9ad8e6"/><rect x="8" y="13" width="1.05" height="1.05" fill="#9ad8e6"/><rect x="9" y="13" width="1.05" height="1.05" fill="#9ad8e6"/><rect x="10" y="13" width="1.05" height="1.05" fill="#9ad8e6"/><rect x="11" y="13" width="1.05" height="1.05" fill="#9ad8e6"/><rect x="12" y="13" width="1.05" height="1.05" fill="#9ad8e6"/><rect x="13" y="13" width="1.05" height="1.05" fill="#7cc0d0"/><rect x="14" y="13" width="1.05" height="1.05" fill="#1f5866"/><rect x="15" y="13" width="1.05" height="1.05" fill="#17434e"/><rect x="16" y="13" width="1.05" height="1.05" fill="#1f5866"/><rect x="0" y="14" width="1.05" height="1.05" fill="#1f5866"/><rect x="1" y="14" width="1.05" height="1.05" fill="#17434e"/><rect x="2" y="14" width="1.05" height="1.05" fill="#357080"/><rect x="3" y="14" width="1.05" height="1.05" fill="#1f5866"/><rect x="4" y="14" width="1.05" height="1.05" fill="#3f7f8e"/><rect x="5" y="14" width="1.05" height="1.05" fill="#3f7f8e"/><rect x="6" y="14" width="1.05" height="1.05" fill="#3f7f8e"/><rect x="7" y="14" width="1.05" height="1.05" fill="#3f7f8e"/><rect x="8" y="14" width="1.05" height="1.05" fill="#3f7f8e"/><rect x="9" y="14" width="1.05" height="1.05" fill="#3f7f8e"/><rect x="10" y="14" width="1.05" height="1.05" fill="#3f7f8e"/><rect x="11" y="14" width="1.05" height="1.05" fill="#3f7f8e"/><rect x="12" y="14" width="1.05" height="1.05" fill="#3f7f8e"/><rect x="13" y="14" width="1.05" height="1.05" fill="#1f5866"/><rect x="14" y="14" width="1.05" height="1.05" fill="#357080"/><rect x="15" y="14" width="1.05" height="1.05" fill="#17434e"/><rect x="16" y="14" width="1.05" height="1.05" fill="#1f5866"/><rect x="0" y="15" width="1.05" height="1.05" fill="#1f5866"/><rect x="1" y="15" width="1.05" height="1.05" fill="#17434e"/><rect x="2" y="15" width="1.05" height="1.05" fill="#357080"/><rect x="3" y="15" width="1.05" height="1.05" fill="#5a9fb0"/><rect x="4" y="15" width="1.05" height="1.05" fill="#5a9fb0"/><rect x="5" y="15" width="1.05" height="1.05" fill="#5a9fb0"/><rect x="6" y="15" width="1.05" height="1.05" fill="#5a9fb0"/><rect x="7" y="15" width="1.05" height="1.05" fill="#5a9fb0"/><rect x="8" y="15" width="1.05" height="1.05" fill="#5a9fb0"/><rect x="9" y="15" width="1.05" height="1.05" fill="#5a9fb0"/><rect x="10" y="15" width="1.05" height="1.05" fill="#5a9fb0"/><rect x="11" y="15" width="1.05" height="1.05" fill="#5a9fb0"/><rect x="12" y="15" width="1.05" height="1.05" fill="#5a9fb0"/><rect x="13" y="15" width="1.05" height="1.05" fill="#5a9fb0"/><rect x="14" y="15" width="1.05" height="1.05" fill="#357080"/><rect x="15" y="15" width="1.05" height="1.05" fill="#17434e"/><rect x="16" y="15" width="1.05" height="1.05" fill="#1f5866"/><rect x="0" y="16" width="1.05" height="1.05" fill="#1f5866"/><rect x="1" y="16" width="1.05" height="1.05" fill="#17434e"/><rect x="2" y="16" width="1.05" height="1.05" fill="#1f5866"/><rect x="3" y="16" width="1.05" height="1.05" fill="#7cc0d0"/><rect x="4" y="16" width="1.05" height="1.05" fill="#9ad8e6"/><rect x="5" y="16" width="1.05" height="1.05" fill="#9ad8e6"/><rect x="6" y="16" width="1.05" height="1.05" fill="#9ad8e6"/><rect x="7" y="16" width="1.05" height="1.05" fill="#9ad8e6"/><rect x="8" y="16" width="1.05" height="1.05" fill="#9ad8e6"/><rect x="9" y="16" width="1.05" height="1.05" fill="#9ad8e6"/><rect x="10" y="16" width="1.05" height="1.05" fill="#9ad8e6"/><rect x="11" y="16" width="1.05" height="1.05" fill="#9ad8e6"/><rect x="12" y="16" width="1.05" height="1.05" fill="#9ad8e6"/><rect x="13" y="16" width="1.05" height="1.05" fill="#7cc0d0"/><rect x="14" y="16" width="1.05" height="1.05" fill="#1f5866"/><rect x="15" y="16" width="1.05" height="1.05" fill="#17434e"/><rect x="16" y="16" width="1.05" height="1.05" fill="#1f5866"/><rect x="0" y="17" width="1.05" height="1.05" fill="#1f5866"/><rect x="1" y="17" width="1.05" height="1.05" fill="#17434e"/><rect x="2" y="17" width="1.05" height="1.05" fill="#1f5866"/><rect x="3" y="17" width="1.05" height="1.05" fill="#9ad8e6"/><rect x="4" y="17" width="1.05" height="1.05" fill="#9ad8e6"/><rect x="5" y="17" width="1.05" height="1.05" fill="#9ad8e6"/><rect x="6" y="17" width="1.05" height="1.05" fill="#9ad8e6"/><rect x="7" y="17" width="1.05" height="1.05" fill="#9ad8e6"/><rect x="8" y="17" width="1.05" height="1.05" fill="#9ad8e6"/><rect x="9" y="17" width="1.05" height="1.05" fill="#9ad8e6"/><rect x="10" y="17" width="1.05" height="1.05" fill="#9ad8e6"/><rect x="11" y="17" width="1.05" height="1.05" fill="#9ad8e6"/><rect x="12" y="17" width="1.05" height="1.05" fill="#9ad8e6"/><rect x="13" y="17" width="1.05" height="1.05" fill="#9ad8e6"/><rect x="14" y="17" width="1.05" height="1.05" fill="#1f5866"/><rect x="15" y="17" width="1.05" height="1.05" fill="#17434e"/><rect x="16" y="17" width="1.05" height="1.05" fill="#1f5866"/><rect x="0" y="18" width="1.05" height="1.05" fill="#3f7f8e"/><rect x="1" y="18" width="1.05" height="1.05" fill="#7cc0d0"/><rect x="2" y="18" width="1.05" height="1.05" fill="#9ad8e6"/><rect x="3" y="18" width="1.05" height="1.05" fill="#9ad8e6"/><rect x="4" y="18" width="1.05" height="1.05" fill="#9ad8e6"/><rect x="5" y="18" width="1.05" height="1.05" fill="#9ad8e6"/><rect x="6" y="18" width="1.05" height="1.05" fill="#9ad8e6"/><rect x="7" y="18" width="1.05" height="1.05" fill="#9ad8e6"/><rect x="8" y="18" width="1.05" height="1.05" fill="#9ad8e6"/><rect x="9" y="18" width="1.05" height="1.05" fill="#9ad8e6"/><rect x="10" y="18" width="1.05" height="1.05" fill="#9ad8e6"/><rect x="11" y="18" width="1.05" height="1.05" fill="#9ad8e6"/><rect x="12" y="18" width="1.05" height="1.05" fill="#9ad8e6"/><rect x="13" y="18" width="1.05" height="1.05" fill="#9ad8e6"/><rect x="14" y="18" width="1.05" height="1.05" fill="#9ad8e6"/><rect x="15" y="18" width="1.05" height="1.05" fill="#7cc0d0"/><rect x="16" y="18" width="1.05" height="1.05" fill="#3f7f8e"/><rect x="0" y="19" width="1.05" height="1.05" fill="#3f7f8e"/><rect x="1" y="19" width="1.05" height="1.05" fill="#9ad8e6"/><rect x="2" y="19" width="1.05" height="1.05" fill="#9ad8e6"/><rect x="3" y="19" width="1.05" height="1.05" fill="#9ad8e6"/><rect x="4" y="19" width="1.05" height="1.05" fill="#9ad8e6"/><rect x="5" y="19" width="1.05" height="1.05" fill="#17434e"/><rect x="6" y="19" width="1.05" height="1.05" fill="#17434e"/><rect x="7" y="19" width="1.05" height="1.05" fill="#17434e"/><rect x="8" y="19" width="1.05" height="1.05" fill="#17434e"/><rect x="9" y="19" width="1.05" height="1.05" fill="#17434e"/><rect x="10" y="19" width="1.05" height="1.05" fill="#9ad8e6"/><rect x="11" y="19" width="1.05" height="1.05" fill="#9ad8e6"/><rect x="12" y="19" width="1.05" height="1.05" fill="#9ad8e6"/><rect x="13" y="19" width="1.05" height="1.05" fill="#9ad8e6"/><rect x="14" y="19" width="1.05" height="1.05" fill="#9ad8e6"/><rect x="15" y="19" width="1.05" height="1.05" fill="#9ad8e6"/><rect x="16" y="19" width="1.05" height="1.05" fill="#3f7f8e"/><rect x="0" y="20" width="1.05" height="1.05" fill="#3f7f8e"/><rect x="1" y="20" width="1.05" height="1.05" fill="#9ad8e6"/><rect x="2" y="20" width="1.05" height="1.05" fill="#9ad8e6"/><rect x="3" y="20" width="1.05" height="1.05" fill="#9ad8e6"/><rect x="4" y="20" width="1.05" height="1.05" fill="#9ad8e6"/><rect x="5" y="20" width="1.05" height="1.05" fill="#17434e"/><rect x="6" y="20" width="1.05" height="1.05" fill="#17434e"/><rect x="7" y="20" width="1.05" height="1.05" fill="#17434e"/><rect x="8" y="20" width="1.05" height="1.05" fill="#17434e"/><rect x="9" y="20" width="1.05" height="1.05" fill="#17434e"/><rect x="10" y="20" width="1.05" height="1.05" fill="#17434e"/><rect x="11" y="20" width="1.05" height="1.05" fill="#9ad8e6"/><rect x="12" y="20" width="1.05" height="1.05" fill="#9ad8e6"/><rect x="13" y="20" width="1.05" height="1.05" fill="#9ad8e6"/><rect x="14" y="20" width="1.05" height="1.05" fill="#9ad8e6"/><rect x="15" y="20" width="1.05" height="1.05" fill="#9ad8e6"/><rect x="16" y="20" width="1.05" height="1.05" fill="#3f7f8e"/><rect x="0" y="21" width="1.05" height="1.05" fill="#3f7f8e"/><rect x="1" y="21" width="1.05" height="1.05" fill="#9ad8e6"/><rect x="2" y="21" width="1.05" height="1.05" fill="#9ad8e6"/><rect x="3" y="21" width="1.05" height="1.05" fill="#9ad8e6"/><rect x="4" y="21" width="1.05" height="1.05" fill="#9ad8e6"/><rect x="10" y="21" width="1.05" height="1.05" fill="#17434e"/><rect x="11" y="21" width="1.05" height="1.05" fill="#17434e"/><rect x="12" y="21" width="1.05" height="1.05" fill="#9ad8e6"/><rect x="13" y="21" width="1.05" height="1.05" fill="#9ad8e6"/><rect x="14" y="21" width="1.05" height="1.05" fill="#9ad8e6"/><rect x="15" y="21" width="1.05" height="1.05" fill="#9ad8e6"/><rect x="16" y="21" width="1.05" height="1.05" fill="#3f7f8e"/><rect x="1" y="22" width="1.05" height="1.05" fill="#9ad8e6"/><rect x="2" y="22" width="1.05" height="1.05" fill="#9ad8e6"/><rect x="3" y="22" width="1.05" height="1.05" fill="#9ad8e6"/><rect x="11" y="22" width="1.05" height="1.05" fill="#7cc0d0"/><rect x="12" y="22" width="1.05" height="1.05" fill="#9ad8e6"/><rect x="13" y="22" width="1.05" height="1.05" fill="#9ad8e6"/><rect x="14" y="22" width="1.05" height="1.05" fill="#9ad8e6"/><rect x="15" y="22" width="1.05" height="1.05" fill="#9ad8e6"/><rect x="16" y="22" width="1.05" height="1.05" fill="#3f7f8e"/><rect x="11" y="23" width="1.05" height="1.05" fill="#7cc0d0"/><rect x="12" y="23" width="1.05" height="1.05" fill="#9ad8e6"/><rect x="13" y="23" width="1.05" height="1.05" fill="#9ad8e6"/><rect x="14" y="23" width="1.05" height="1.05" fill="#9ad8e6"/><rect x="15" y="23" width="1.05" height="1.05" fill="#3f7f8e"/></g></g></g><line x1="776.5" y1="0" x2="776.5" y2="303.5" stroke="#86c20f" stroke-width="1"/><line x1="776.5" y1="303.5" x2="776.5" y2="527" stroke="#8fb38f" stroke-width="1"/><line x1="0" y1="303.5" x2="776.5" y2="303.5" stroke="#d8485c" stroke-width="1"/><line x1="776.5" y1="303.5" x2="1331" y2="303.5" stroke="#b052b0" stroke-width="1"/><g transform="translate(776.5,335.6)"><circle r="3.6" fill="#b8c8cc" fill-opacity="0.8" stroke="#2a3a40" stroke-width="0.8"/><rect x="-7" y="-0.8" width="3" height="1.6" fill="#b8c8cc"/><rect x="4" y="-0.8" width="3" height="1.6" fill="#b8c8cc"/><rect x="-0.8" y="-7" width="1.6" height="3" fill="#b8c8cc"/><rect x="-0.8" y="4" width="1.6" height="3" fill="#b8c8cc"/></g><g transform="translate(776.5,303.5)"><rect x="-1.5" y="-7" width="4" height="14" fill="#eee"/><rect x="-7" y="-1.5" width="14" height="4" fill="#eee"/><rect x="-0.5" y="-6" width="2" height="12" fill="#ff4a5a"/><rect x="-6" y="-0.5" width="12" height="2" fill="#ff4a5a"/><rect x="1.5" y="1.5" width="7" height="6" fill="#eee"/><rect x="3" y="3" width="4" height="3" fill="#2a6070"/><rect x="9" y="1.5" width="6" height="6" fill="none" stroke="#eee" stroke-width="1.5"/><rect x="2" y="7" width="8" height="8" fill="#e6e6e6"/><rect x="13" y="10.5" width="3" height="3" fill="#fff" stroke="#222" stroke-width="0.8"/></g><circle cx="643.5" cy="170.5" r="4.6" fill="none" stroke="#222" stroke-opacity="0.6" stroke-width="1"/><circle cx="643.5" cy="170.5" r="3.5" fill="#ff5a5a" stroke="#fff" stroke-width="1.3"/><circle cx="643.5" cy="303.5" r="4.6" fill="none" stroke="#222" stroke-opacity="0.6" stroke-width="1"/><circle cx="643.5" cy="303.5" r="3.5" fill="#ff5a5a" stroke="#fff" stroke-width="1.3"/><circle cx="643.5" cy="436.5" r="4.6" fill="none" stroke="#222" stroke-opacity="0.6" stroke-width="1"/><circle cx="643.5" cy="436.5" r="3.5" fill="#ff5a5a" stroke="#fff" stroke-width="1.3"/><circle cx="776.5" cy="170.5" r="4.6" fill="none" stroke="#222" stroke-opacity="0.6" stroke-width="1"/><circle cx="776.5" cy="170.5" r="3.5" fill="#ff5a5a" stroke="#fff" stroke-width="1.3"/><circle cx="776.5" cy="436.5" r="4.6" fill="none" stroke="#222" stroke-opacity="0.6" stroke-width="1"/><circle cx="776.5" cy="436.5" r="3.5" fill="#ff5a5a" stroke="#fff" stroke-width="1.3"/><circle cx="910.5" cy="170.5" r="4.6" fill="none" stroke="#222" stroke-opacity="0.6" stroke-width="1"/><circle cx="910.5" cy="170.5" r="3.5" fill="#ff5a5a" stroke="#fff" stroke-width="1.3"/><circle cx="910.5" cy="303.5" r="4.6" fill="none" stroke="#222" stroke-opacity="0.6" stroke-width="1"/><circle cx="910.5" cy="303.5" r="3.5" fill="#ff5a5a" stroke="#fff" stroke-width="1.3"/><circle cx="910.5" cy="436.5" r="4.6" fill="none" stroke="#222" stroke-opacity="0.6" stroke-width="1"/><circle cx="910.5" cy="436.5" r="3.5" fill="#ff5a5a" stroke="#fff" stroke-width="1.3"/><rect x="2" y="518" width="1317" height="7" rx="3.5" fill="#ffffff" fill-opacity="0.06"/><rect x="1323" y="3" width="7" height="512" rx="3.5" fill="#ffffff" fill-opacity="0.06"/><rect x="4" y="519" width="613" height="7" rx="3.5" fill="#9a9a9a" fill-opacity="0.55"/><rect x="1323" y="114" width="6" height="148" rx="3" fill="#9a9a9a" fill-opacity="0.35"/></svg>
<svg class="a" style="left:288px;top:138px;overflow:hidden" width="1344" height="13"><line x1="20.5" y1="0" x2="20.5" y2="13" stroke="#b0b0b0" stroke-width="1"/><text x="22.5" y="8.6" font-size="8.6" fill="#b8b8b8" font-family="Liberation Sans">-576</text><line x1="29.5" y1="9" x2="29.5" y2="13" stroke="#b0b0b0" stroke-width="1"/><line x1="37.5" y1="9" x2="37.5" y2="13" stroke="#b0b0b0" stroke-width="1"/><line x1="46.5" y1="9" x2="46.5" y2="13" stroke="#b0b0b0" stroke-width="1"/><line x1="54.5" y1="9" x2="54.5" y2="13" stroke="#b0b0b0" stroke-width="1"/><line x1="63.5" y1="4" x2="63.5" y2="13" stroke="#b0b0b0" stroke-width="1"/><line x1="72.5" y1="9" x2="72.5" y2="13" stroke="#b0b0b0" stroke-width="1"/><line x1="80.5" y1="9" x2="80.5" y2="13" stroke="#b0b0b0" stroke-width="1"/><line x1="89.5" y1="9" x2="89.5" y2="13" stroke="#b0b0b0" stroke-width="1"/><line x1="97.5" y1="9" x2="97.5" y2="13" stroke="#b0b0b0" stroke-width="1"/><line x1="106.5" y1="0" x2="106.5" y2="13" stroke="#b0b0b0" stroke-width="1"/><text x="108.5" y="8.6" font-size="8.6" fill="#b8b8b8" font-family="Liberation Sans">-512</text><line x1="114.5" y1="9" x2="114.5" y2="13" stroke="#b0b0b0" stroke-width="1"/><line x1="123.5" y1="9" x2="123.5" y2="13" stroke="#b0b0b0" stroke-width="1"/><line x1="131.5" y1="9" x2="131.5" y2="13" stroke="#b0b0b0" stroke-width="1"/><line x1="140.5" y1="9" x2="140.5" y2="13" stroke="#b0b0b0" stroke-width="1"/><line x1="148.5" y1="4" x2="148.5" y2="13" stroke="#b0b0b0" stroke-width="1"/><line x1="157.5" y1="9" x2="157.5" y2="13" stroke="#b0b0b0" stroke-width="1"/><line x1="165.5" y1="9" x2="165.5" y2="13" stroke="#b0b0b0" stroke-width="1"/><line x1="174.5" y1="9" x2="174.5" y2="13" stroke="#b0b0b0" stroke-width="1"/><line x1="183.5" y1="9" x2="183.5" y2="13" stroke="#b0b0b0" stroke-width="1"/><line x1="191.5" y1="0" x2="191.5" y2="13" stroke="#b0b0b0" stroke-width="1"/><text x="193.5" y="8.6" font-size="8.6" fill="#b8b8b8" font-family="Liberation Sans">-448</text><line x1="200.5" y1="9" x2="200.5" y2="13" stroke="#b0b0b0" stroke-width="1"/><line x1="208.5" y1="9" x2="208.5" y2="13" stroke="#b0b0b0" stroke-width="1"/><line x1="217.5" y1="9" x2="217.5" y2="13" stroke="#b0b0b0" stroke-width="1"/><line x1="225.5" y1="9" x2="225.5" y2="13" stroke="#b0b0b0" stroke-width="1"/><line x1="234.5" y1="4" x2="234.5" y2="13" stroke="#b0b0b0" stroke-width="1"/><line x1="242.5" y1="9" x2="242.5" y2="13" stroke="#b0b0b0" stroke-width="1"/><line x1="251.5" y1="9" x2="251.5" y2="13" stroke="#b0b0b0" stroke-width="1"/><line x1="259.5" y1="9" x2="259.5" y2="13" stroke="#b0b0b0" stroke-width="1"/><line x1="268.5" y1="9" x2="268.5" y2="13" stroke="#b0b0b0" stroke-width="1"/><line x1="277.5" y1="0" x2="277.5" y2="13" stroke="#b0b0b0" stroke-width="1"/><text x="279.5" y="8.6" font-size="8.6" fill="#b8b8b8" font-family="Liberation Sans">-384</text><line x1="285.5" y1="9" x2="285.5" y2="13" stroke="#b0b0b0" stroke-width="1"/><line x1="294.5" y1="9" x2="294.5" y2="13" stroke="#b0b0b0" stroke-width="1"/><line x1="302.5" y1="9" x2="302.5" y2="13" stroke="#b0b0b0" stroke-width="1"/><line x1="311.5" y1="9" x2="311.5" y2="13" stroke="#b0b0b0" stroke-width="1"/><line x1="319.5" y1="4" x2="319.5" y2="13" stroke="#b0b0b0" stroke-width="1"/><line x1="328.5" y1="9" x2="328.5" y2="13" stroke="#b0b0b0" stroke-width="1"/><line x1="336.5" y1="9" x2="336.5" y2="13" stroke="#b0b0b0" stroke-width="1"/><line x1="345.5" y1="9" x2="345.5" y2="13" stroke="#b0b0b0" stroke-width="1"/><line x1="353.5" y1="9" x2="353.5" y2="13" stroke="#b0b0b0" stroke-width="1"/><line x1="362.5" y1="0" x2="362.5" y2="13" stroke="#b0b0b0" stroke-width="1"/><text x="364.5" y="8.6" font-size="8.6" fill="#b8b8b8" font-family="Liberation Sans">-320</text><line x1="370.5" y1="9" x2="370.5" y2="13" stroke="#b0b0b0" stroke-width="1"/><line x1="379.5" y1="9" x2="379.5" y2="13" stroke="#b0b0b0" stroke-width="1"/><line x1="388.5" y1="9" x2="388.5" y2="13" stroke="#b0b0b0" stroke-width="1"/><line x1="396.5" y1="9" x2="396.5" y2="13" stroke="#b0b0b0" stroke-width="1"/><line x1="405.5" y1="4" x2="405.5" y2="13" stroke="#b0b0b0" stroke-width="1"/><line x1="413.5" y1="9" x2="413.5" y2="13" stroke="#b0b0b0" stroke-width="1"/><line x1="422.5" y1="9" x2="422.5" y2="13" stroke="#b0b0b0" stroke-width="1"/><line x1="430.5" y1="9" x2="430.5" y2="13" stroke="#b0b0b0" stroke-width="1"/><line x1="439.5" y1="9" x2="439.5" y2="13" stroke="#b0b0b0" stroke-width="1"/><line x1="447.5" y1="0" x2="447.5" y2="13" stroke="#b0b0b0" stroke-width="1"/><text x="449.5" y="8.6" font-size="8.6" fill="#b8b8b8" font-family="Liberation Sans">-256</text><line x1="456.5" y1="9" x2="456.5" y2="13" stroke="#b0b0b0" stroke-width="1"/><line x1="464.5" y1="9" x2="464.5" y2="13" stroke="#b0b0b0" stroke-width="1"/><line x1="473.5" y1="9" x2="473.5" y2="13" stroke="#b0b0b0" stroke-width="1"/><line x1="482.5" y1="9" x2="482.5" y2="13" stroke="#b0b0b0" stroke-width="1"/><line x1="490.5" y1="4" x2="490.5" y2="13" stroke="#b0b0b0" stroke-width="1"/><line x1="499.5" y1="9" x2="499.5" y2="13" stroke="#b0b0b0" stroke-width="1"/><line x1="507.5" y1="9" x2="507.5" y2="13" stroke="#b0b0b0" stroke-width="1"/><line x1="516.5" y1="9" x2="516.5" y2="13" stroke="#b0b0b0" stroke-width="1"/><line x1="524.5" y1="9" x2="524.5" y2="13" stroke="#b0b0b0" stroke-width="1"/><line x1="533.5" y1="0" x2="533.5" y2="13" stroke="#b0b0b0" stroke-width="1"/><text x="535.5" y="8.6" font-size="8.6" fill="#b8b8b8" font-family="Liberation Sans">-192</text><line x1="541.5" y1="9" x2="541.5" y2="13" stroke="#b0b0b0" stroke-width="1"/><line x1="550.5" y1="9" x2="550.5" y2="13" stroke="#b0b0b0" stroke-width="1"/><line x1="558.5" y1="9" x2="558.5" y2="13" stroke="#b0b0b0" stroke-width="1"/><line x1="567.5" y1="9" x2="567.5" y2="13" stroke="#b0b0b0" stroke-width="1"/><line x1="575.5" y1="4" x2="575.5" y2="13" stroke="#b0b0b0" stroke-width="1"/><line x1="584.5" y1="9" x2="584.5" y2="13" stroke="#b0b0b0" stroke-width="1"/><line x1="593.5" y1="9" x2="593.5" y2="13" stroke="#b0b0b0" stroke-width="1"/><line x1="601.5" y1="9" x2="601.5" y2="13" stroke="#b0b0b0" stroke-width="1"/><line x1="610.5" y1="9" x2="610.5" y2="13" stroke="#b0b0b0" stroke-width="1"/><line x1="618.5" y1="0" x2="618.5" y2="13" stroke="#b0b0b0" stroke-width="1"/><text x="620.5" y="8.6" font-size="8.6" fill="#b8b8b8" font-family="Liberation Sans">-128</text><line x1="627.5" y1="9" x2="627.5" y2="13" stroke="#b0b0b0" stroke-width="1"/><line x1="635.5" y1="9" x2="635.5" y2="13" stroke="#b0b0b0" stroke-width="1"/><line x1="644.5" y1="9" x2="644.5" y2="13" stroke="#b0b0b0" stroke-width="1"/><line x1="652.5" y1="9" x2="652.5" y2="13" stroke="#b0b0b0" stroke-width="1"/><line x1="661.5" y1="4" x2="661.5" y2="13" stroke="#b0b0b0" stroke-width="1"/><line x1="669.5" y1="9" x2="669.5" y2="13" stroke="#b0b0b0" stroke-width="1"/><line x1="678.5" y1="9" x2="678.5" y2="13" stroke="#b0b0b0" stroke-width="1"/><line x1="687.5" y1="9" x2="687.5" y2="13" stroke="#b0b0b0" stroke-width="1"/><line x1="695.5" y1="9" x2="695.5" y2="13" stroke="#b0b0b0" stroke-width="1"/><line x1="704.5" y1="0" x2="704.5" y2="13" stroke="#b0b0b0" stroke-width="1"/><text x="706.5" y="8.6" font-size="8.6" fill="#b8b8b8" font-family="Liberation Sans">-64</text><line x1="712.5" y1="9" x2="712.5" y2="13" stroke="#b0b0b0" stroke-width="1"/><line x1="721.5" y1="9" x2="721.5" y2="13" stroke="#b0b0b0" stroke-width="1"/><line x1="729.5" y1="9" x2="729.5" y2="13" stroke="#b0b0b0" stroke-width="1"/><line x1="738.5" y1="9" x2="738.5" y2="13" stroke="#b0b0b0" stroke-width="1"/><line x1="746.5" y1="4" x2="746.5" y2="13" stroke="#b0b0b0" stroke-width="1"/><line x1="755.5" y1="9" x2="755.5" y2="13" stroke="#b0b0b0" stroke-width="1"/><line x1="763.5" y1="9" x2="763.5" y2="13" stroke="#b0b0b0" stroke-width="1"/><line x1="772.5" y1="9" x2="772.5" y2="13" stroke="#b0b0b0" stroke-width="1"/><line x1="780.5" y1="9" x2="780.5" y2="13" stroke="#b0b0b0" stroke-width="1"/><line x1="789.5" y1="0" x2="789.5" y2="13" stroke="#b0b0b0" stroke-width="1"/><text x="791.5" y="8.6" font-size="8.6" fill="#b8b8b8" font-family="Liberation Sans">0</text><line x1="798.5" y1="9" x2="798.5" y2="13" stroke="#b0b0b0" stroke-width="1"/><line x1="806.5" y1="9" x2="806.5" y2="13" stroke="#b0b0b0" stroke-width="1"/><line x1="815.5" y1="9" x2="815.5" y2="13" stroke="#b0b0b0" stroke-width="1"/><line x1="823.5" y1="9" x2="823.5" y2="13" stroke="#b0b0b0" stroke-width="1"/><line x1="832.5" y1="4" x2="832.5" y2="13" stroke="#b0b0b0" stroke-width="1"/><line x1="840.5" y1="9" x2="840.5" y2="13" stroke="#b0b0b0" stroke-width="1"/><line x1="849.5" y1="9" x2="849.5" y2="13" stroke="#b0b0b0" stroke-width="1"/><line x1="857.5" y1="9" x2="857.5" y2="13" stroke="#b0b0b0" stroke-width="1"/><line x1="866.5" y1="9" x2="866.5" y2="13" stroke="#b0b0b0" stroke-width="1"/><line x1="874.5" y1="0" x2="874.5" y2="13" stroke="#b0b0b0" stroke-width="1"/><text x="876.5" y="8.6" font-size="8.6" fill="#b8b8b8" font-family="Liberation Sans">64</text><line x1="883.5" y1="9" x2="883.5" y2="13" stroke="#b0b0b0" stroke-width="1"/><line x1="891.5" y1="9" x2="891.5" y2="13" stroke="#b0b0b0" stroke-width="1"/><line x1="900.5" y1="9" x2="900.5" y2="13" stroke="#b0b0b0" stroke-width="1"/><line x1="909.5" y1="9" x2="909.5" y2="13" stroke="#b0b0b0" stroke-width="1"/><line x1="917.5" y1="4" x2="917.5" y2="13" stroke="#b0b0b0" stroke-width="1"/><line x1="926.5" y1="9" x2="926.5" y2="13" stroke="#b0b0b0" stroke-width="1"/><line x1="934.5" y1="9" x2="934.5" y2="13" stroke="#b0b0b0" stroke-width="1"/><line x1="943.5" y1="9" x2="943.5" y2="13" stroke="#b0b0b0" stroke-width="1"/><line x1="951.5" y1="9" x2="951.5" y2="13" stroke="#b0b0b0" stroke-width="1"/><line x1="960.5" y1="0" x2="960.5" y2="13" stroke="#b0b0b0" stroke-width="1"/><text x="962.5" y="8.6" font-size="8.6" fill="#b8b8b8" font-family="Liberation Sans">128</text><line x1="968.5" y1="9" x2="968.5" y2="13" stroke="#b0b0b0" stroke-width="1"/><line x1="977.5" y1="9" x2="977.5" y2="13" stroke="#b0b0b0" stroke-width="1"/><line x1="985.5" y1="9" x2="985.5" y2="13" stroke="#b0b0b0" stroke-width="1"/><line x1="994.5" y1="9" x2="994.5" y2="13" stroke="#b0b0b0" stroke-width="1"/><line x1="1003.5" y1="4" x2="1003.5" y2="13" stroke="#b0b0b0" stroke-width="1"/><line x1="1011.5" y1="9" x2="1011.5" y2="13" stroke="#b0b0b0" stroke-width="1"/><line x1="1020.5" y1="9" x2="1020.5" y2="13" stroke="#b0b0b0" stroke-width="1"/><line x1="1028.5" y1="9" x2="1028.5" y2="13" stroke="#b0b0b0" stroke-width="1"/><line x1="1037.5" y1="9" x2="1037.5" y2="13" stroke="#b0b0b0" stroke-width="1"/><line x1="1045.5" y1="0" x2="1045.5" y2="13" stroke="#b0b0b0" stroke-width="1"/><text x="1047.5" y="8.6" font-size="8.6" fill="#b8b8b8" font-family="Liberation Sans">192</text><line x1="1054.5" y1="9" x2="1054.5" y2="13" stroke="#b0b0b0" stroke-width="1"/><line x1="1062.5" y1="9" x2="1062.5" y2="13" stroke="#b0b0b0" stroke-width="1"/><line x1="1071.5" y1="9" x2="1071.5" y2="13" stroke="#b0b0b0" stroke-width="1"/><line x1="1079.5" y1="9" x2="1079.5" y2="13" stroke="#b0b0b0" stroke-width="1"/><line x1="1088.5" y1="4" x2="1088.5" y2="13" stroke="#b0b0b0" stroke-width="1"/><line x1="1096.5" y1="9" x2="1096.5" y2="13" stroke="#b0b0b0" stroke-width="1"/><line x1="1105.5" y1="9" x2="1105.5" y2="13" stroke="#b0b0b0" stroke-width="1"/><line x1="1114.5" y1="9" x2="1114.5" y2="13" stroke="#b0b0b0" stroke-width="1"/><line x1="1122.5" y1="9" x2="1122.5" y2="13" stroke="#b0b0b0" stroke-width="1"/><line x1="1131.5" y1="0" x2="1131.5" y2="13" stroke="#b0b0b0" stroke-width="1"/><text x="1133.5" y="8.6" font-size="8.6" fill="#b8b8b8" font-family="Liberation Sans">256</text><line x1="1139.5" y1="9" x2="1139.5" y2="13" stroke="#b0b0b0" stroke-width="1"/><line x1="1148.5" y1="9" x2="1148.5" y2="13" stroke="#b0b0b0" stroke-width="1"/><line x1="1156.5" y1="9" x2="1156.5" y2="13" stroke="#b0b0b0" stroke-width="1"/><line x1="1165.5" y1="9" x2="1165.5" y2="13" stroke="#b0b0b0" stroke-width="1"/><line x1="1173.5" y1="4" x2="1173.5" y2="13" stroke="#b0b0b0" stroke-width="1"/><line x1="1182.5" y1="9" x2="1182.5" y2="13" stroke="#b0b0b0" stroke-width="1"/><line x1="1190.5" y1="9" x2="1190.5" y2="13" stroke="#b0b0b0" stroke-width="1"/><line x1="1199.5" y1="9" x2="1199.5" y2="13" stroke="#b0b0b0" stroke-width="1"/><line x1="1208.5" y1="9" x2="1208.5" y2="13" stroke="#b0b0b0" stroke-width="1"/><line x1="1216.5" y1="0" x2="1216.5" y2="13" stroke="#b0b0b0" stroke-width="1"/><text x="1218.5" y="8.6" font-size="8.6" fill="#b8b8b8" font-family="Liberation Sans">320</text><line x1="1225.5" y1="9" x2="1225.5" y2="13" stroke="#b0b0b0" stroke-width="1"/><line x1="1233.5" y1="9" x2="1233.5" y2="13" stroke="#b0b0b0" stroke-width="1"/><line x1="1242.5" y1="9" x2="1242.5" y2="13" stroke="#b0b0b0" stroke-width="1"/><line x1="1250.5" y1="9" x2="1250.5" y2="13" stroke="#b0b0b0" stroke-width="1"/><line x1="1259.5" y1="4" x2="1259.5" y2="13" stroke="#b0b0b0" stroke-width="1"/><line x1="1267.5" y1="9" x2="1267.5" y2="13" stroke="#b0b0b0" stroke-width="1"/><line x1="1276.5" y1="9" x2="1276.5" y2="13" stroke="#b0b0b0" stroke-width="1"/><line x1="1284.5" y1="9" x2="1284.5" y2="13" stroke="#b0b0b0" stroke-width="1"/><line x1="1293.5" y1="9" x2="1293.5" y2="13" stroke="#b0b0b0" stroke-width="1"/><line x1="1301.5" y1="0" x2="1301.5" y2="13" stroke="#b0b0b0" stroke-width="1"/><text x="1303.5" y="8.6" font-size="8.6" fill="#b8b8b8" font-family="Liberation Sans">384</text><line x1="1310.5" y1="9" x2="1310.5" y2="13" stroke="#b0b0b0" stroke-width="1"/><line x1="1319.5" y1="9" x2="1319.5" y2="13" stroke="#b0b0b0" stroke-width="1"/><line x1="1327.5" y1="9" x2="1327.5" y2="13" stroke="#b0b0b0" stroke-width="1"/><line x1="1336.5" y1="9" x2="1336.5" y2="13" stroke="#b0b0b0" stroke-width="1"/></svg>
<svg class="a" style="left:288px;top:151px;overflow:hidden" width="13" height="527"><line x1="4" y1="4.5" x2="13" y2="4.5" stroke="#b0b0b0" stroke-width="1"/><line x1="9" y1="12.5" x2="13" y2="12.5" stroke="#b0b0b0" stroke-width="1"/><line x1="9" y1="21.5" x2="13" y2="21.5" stroke="#b0b0b0" stroke-width="1"/><line x1="9" y1="29.5" x2="13" y2="29.5" stroke="#b0b0b0" stroke-width="1"/><line x1="9" y1="38.5" x2="13" y2="38.5" stroke="#b0b0b0" stroke-width="1"/><line x1="0" y1="47.5" x2="13" y2="47.5" stroke="#b0b0b0" stroke-width="1"/><text transform="translate(8.6,45.5) rotate(-90)" font-size="8.6" fill="#b8b8b8" font-family="Liberation Sans">-192</text><line x1="9" y1="55.5" x2="13" y2="55.5" stroke="#b0b0b0" stroke-width="1"/><line x1="9" y1="64.5" x2="13" y2="64.5" stroke="#b0b0b0" stroke-width="1"/><line x1="9" y1="72.5" x2="13" y2="72.5" stroke="#b0b0b0" stroke-width="1"/><line x1="9" y1="81.5" x2="13" y2="81.5" stroke="#b0b0b0" stroke-width="1"/><line x1="4" y1="89.5" x2="13" y2="89.5" stroke="#b0b0b0" stroke-width="1"/><line x1="9" y1="98.5" x2="13" y2="98.5" stroke="#b0b0b0" stroke-width="1"/><line x1="9" y1="106.5" x2="13" y2="106.5" stroke="#b0b0b0" stroke-width="1"/><line x1="9" y1="115.5" x2="13" y2="115.5" stroke="#b0b0b0" stroke-width="1"/><line x1="9" y1="123.5" x2="13" y2="123.5" stroke="#b0b0b0" stroke-width="1"/><line x1="0" y1="132.5" x2="13" y2="132.5" stroke="#b0b0b0" stroke-width="1"/><text transform="translate(8.6,130.5) rotate(-90)" font-size="8.6" fill="#b8b8b8" font-family="Liberation Sans">-128</text><line x1="9" y1="141.5" x2="13" y2="141.5" stroke="#b0b0b0" stroke-width="1"/><line x1="9" y1="149.5" x2="13" y2="149.5" stroke="#b0b0b0" stroke-width="1"/><line x1="9" y1="158.5" x2="13" y2="158.5" stroke="#b0b0b0" stroke-width="1"/><line x1="9" y1="166.5" x2="13" y2="166.5" stroke="#b0b0b0" stroke-width="1"/><line x1="4" y1="175.5" x2="13" y2="175.5" stroke="#b0b0b0" stroke-width="1"/><line x1="9" y1="183.5" x2="13" y2="183.5" stroke="#b0b0b0" stroke-width="1"/><line x1="9" y1="192.5" x2="13" y2="192.5" stroke="#b0b0b0" stroke-width="1"/><line x1="9" y1="200.5" x2="13" y2="200.5" stroke="#b0b0b0" stroke-width="1"/><line x1="9" y1="209.5" x2="13" y2="209.5" stroke="#b0b0b0" stroke-width="1"/><line x1="0" y1="217.5" x2="13" y2="217.5" stroke="#b0b0b0" stroke-width="1"/><text transform="translate(8.6,215.5) rotate(-90)" font-size="8.6" fill="#b8b8b8" font-family="Liberation Sans">-64</text><line x1="9" y1="226.5" x2="13" y2="226.5" stroke="#b0b0b0" stroke-width="1"/><line x1="9" y1="234.5" x2="13" y2="234.5" stroke="#b0b0b0" stroke-width="1"/><line x1="9" y1="243.5" x2="13" y2="243.5" stroke="#b0b0b0" stroke-width="1"/><line x1="9" y1="252.5" x2="13" y2="252.5" stroke="#b0b0b0" stroke-width="1"/><line x1="4" y1="260.5" x2="13" y2="260.5" stroke="#b0b0b0" stroke-width="1"/><line x1="9" y1="269.5" x2="13" y2="269.5" stroke="#b0b0b0" stroke-width="1"/><line x1="9" y1="277.5" x2="13" y2="277.5" stroke="#b0b0b0" stroke-width="1"/><line x1="9" y1="286.5" x2="13" y2="286.5" stroke="#b0b0b0" stroke-width="1"/><line x1="9" y1="294.5" x2="13" y2="294.5" stroke="#b0b0b0" stroke-width="1"/><line x1="0" y1="303.5" x2="13" y2="303.5" stroke="#b0b0b0" stroke-width="1"/><text transform="translate(8.6,301.5) rotate(-90)" font-size="8.6" fill="#b8b8b8" font-family="Liberation Sans">0</text><line x1="9" y1="311.5" x2="13" y2="311.5" stroke="#b0b0b0" stroke-width="1"/><line x1="9" y1="320.5" x2="13" y2="320.5" stroke="#b0b0b0" stroke-width="1"/><line x1="9" y1="328.5" x2="13" y2="328.5" stroke="#b0b0b0" stroke-width="1"/><line x1="9" y1="337.5" x2="13" y2="337.5" stroke="#b0b0b0" stroke-width="1"/><line x1="4" y1="346.5" x2="13" y2="346.5" stroke="#b0b0b0" stroke-width="1"/><line x1="9" y1="354.5" x2="13" y2="354.5" stroke="#b0b0b0" stroke-width="1"/><line x1="9" y1="363.5" x2="13" y2="363.5" stroke="#b0b0b0" stroke-width="1"/><line x1="9" y1="371.5" x2="13" y2="371.5" stroke="#b0b0b0" stroke-width="1"/><line x1="9" y1="380.5" x2="13" y2="380.5" stroke="#b0b0b0" stroke-width="1"/><line x1="0" y1="388.5" x2="13" y2="388.5" stroke="#b0b0b0" stroke-width="1"/><text transform="translate(8.6,386.5) rotate(-90)" font-size="8.6" fill="#b8b8b8" font-family="Liberation Sans">64</text><line x1="9" y1="397.5" x2="13" y2="397.5" stroke="#b0b0b0" stroke-width="1"/><line x1="9" y1="405.5" x2="13" y2="405.5" stroke="#b0b0b0" stroke-width="1"/><line x1="9" y1="414.5" x2="13" y2="414.5" stroke="#b0b0b0" stroke-width="1"/><line x1="9" y1="422.5" x2="13" y2="422.5" stroke="#b0b0b0" stroke-width="1"/><line x1="4" y1="431.5" x2="13" y2="431.5" stroke="#b0b0b0" stroke-width="1"/><line x1="9" y1="439.5" x2="13" y2="439.5" stroke="#b0b0b0" stroke-width="1"/><line x1="9" y1="448.5" x2="13" y2="448.5" stroke="#b0b0b0" stroke-width="1"/><line x1="9" y1="457.5" x2="13" y2="457.5" stroke="#b0b0b0" stroke-width="1"/><line x1="9" y1="465.5" x2="13" y2="465.5" stroke="#b0b0b0" stroke-width="1"/><line x1="0" y1="474.5" x2="13" y2="474.5" stroke="#b0b0b0" stroke-width="1"/><text transform="translate(8.6,472.5) rotate(-90)" font-size="8.6" fill="#b8b8b8" font-family="Liberation Sans">128</text><line x1="9" y1="482.5" x2="13" y2="482.5" stroke="#b0b0b0" stroke-width="1"/><line x1="9" y1="491.5" x2="13" y2="491.5" stroke="#b0b0b0" stroke-width="1"/><line x1="9" y1="499.5" x2="13" y2="499.5" stroke="#b0b0b0" stroke-width="1"/><line x1="9" y1="508.5" x2="13" y2="508.5" stroke="#b0b0b0" stroke-width="1"/><line x1="4" y1="516.5" x2="13" y2="516.5" stroke="#b0b0b0" stroke-width="1"/><line x1="9" y1="525.5" x2="13" y2="525.5" stroke="#b0b0b0" stroke-width="1"/></svg>
<div class="t" style="left:368px;top:162.15px;font-size:14px;color:#e8e8e8;text-shadow:0 0 1.5px #222">133.5 %</div>
<div class="t" style="left:832px;top:110.30px;font-size:15px;color:#cdcfd2;">Вид</div>
<div class="a" style="left:286px;top:688px;width:1348px;height:344px;background:#363d4a;border-radius:3px"></div>
<div class="t" style="left:294px;top:699.30px;font-size:15px;color:#cdcfd2;font-weight:700;">Анимации:</div>
<div class="t" style="left:524px;top:699.30px;font-size:15px;color:#cdcfd2;font-weight:700;">Кадры Анимации:</div>
<div class="a" style="left:290px;top:758px;width:220px;height:26px;background:#21262e;border-radius:2px;box-shadow:inset 0 -2px 0 #1a1d23"></div>
<div class="t" style="left:296px;top:763.30px;font-size:15px;color:#9a9da2;">Фильтр анимации</div>
<div class="a" style="left:290px;top:789px;width:222px;height:205px;background:#21262e;border-radius:2px"></div>
<div class="t" style="left:310px;top:800.30px;font-size:15px;color:#cdcfd2;">idle</div>
<div class="a" style="left:306px;top:822px;width:202px;height:28px;background:#374e66;border-radius:3px"></div>
<div class="t" style="left:310px;top:828.30px;font-size:15px;color:#e6e7e9;">walk_down</div>
<div class="t" style="left:310px;top:856.30px;font-size:15px;color:#cdcfd2;">walk_left</div>
<div class="t" style="left:310px;top:884.30px;font-size:15px;color:#cdcfd2;">walk_right</div>
<div class="t" style="left:310px;top:912.30px;font-size:15px;color:#cdcfd2;">walk_up</div>
<div class="a" style="left:520px;top:758px;width:1110px;height:236px;background:#232932;border-radius:2px"></div>
<div class="a" style="left:521px;top:759px;width:156px;height:136px;background:#3c536b;border-radius:2px"></div>
<div class="t" style="left:590px;top:870.30px;font-size:15px;color:#cdcfd2;">0</div>
<div class="t" style="left:746px;top:870.30px;font-size:15px;color:#cdcfd2;">1</div>
<div class="t" style="left:902px;top:870.30px;font-size:15px;color:#cdcfd2;">2</div>
<div class="t" style="left:1058px;top:870.30px;font-size:15px;color:#cdcfd2;">3</div>
<svg class="a" style="left:591px;top:814px" width="17" height="25" viewBox="0 0 17 24" shape-rendering="crispEdges"><rect x="6" y="0" width="3" height="1" fill="#6f8a8a"/><rect x="5" y="1" width="2" height="1" fill="#6f8a8a"/><rect x="7" y="1" width="1" height="1" fill="#f4f0fa"/><rect x="8" y="1" width="2" height="1" fill="#6f8a8a"/><rect x="2" y="2" width="2" height="1" fill="#4a2016"/><rect x="6" y="2" width="4" height="1" fill="#4a2016"/><rect x="13" y="2" width="2" height="1" fill="#4a2016"/><rect x="2" y="3" width="13" height="1" fill="#4a2016"/><rect x="2" y="4" width="2" height="1" fill="#4a2016"/><rect x="4" y="4" width="3" height="1" fill="#f4f0fa"/><rect x="7" y="4" width="3" height="1" fill="#4a2016"/><rect x="10" y="4" width="3" height="1" fill="#f4f0fa"/><rect x="13" y="4" width="2" height="1" fill="#4a2016"/><rect x="0" y="5" width="4" height="1" fill="#4a2016"/><rect x="4" y="5" width="3" height="1" fill="#f4f0fa"/><rect x="7" y="5" width="3" height="1" fill="#4a2016"/><rect x="10" y="5" width="3" height="1" fill="#f4f0fa"/><rect x="13" y="5" width="4" height="1" fill="#4a2016"/><rect x="0" y="6" width="1" height="1" fill="#4a2016"/><rect x="1" y="6" width="1" height="1" fill="#2e120c"/><rect x="2" y="6" width="2" height="1" fill="#4a2016"/><rect x="4" y="6" width="9" height="1" fill="#f4f0fa"/><rect x="13" y="6" width="2" height="1" fill="#4a2016"/><rect x="15" y="6" width="1" height="1" fill="#2e120c"/><rect x="16" y="6" width="1" height="1" fill="#4a2016"/><rect x="0" y="7" width="1" height="1" fill="#4a2016"/><rect x="1" y="7" width="1" height="1" fill="#2e120c"/><rect x="2" y="7" width="2" height="1" fill="#4a2016"/><rect x="4" y="7" width="2" height="1" fill="#0c0c0c"/><rect x="6" y="7" width="5" height="1" fill="#f4f0fa"/><rect x="11" y="7" width="2" height="1" fill="#0c0c0c"/><rect x="13" y="7" width="2" height="1" fill="#4a2016"/><rect x="15" y="7" width="1" height="1" fill="#2e120c"/><rect x="16" y="7" width="1" height="1" fill="#4a2016"/><rect x="0" y="8" width="1" height="1" fill="#4a2016"/><rect x="1" y="8" width="1" height="1" fill="#2e120c"/><rect x="2" y="8" width="2" height="1" fill="#cfcae0"/><rect x="4" y="8" width="9" height="1" fill="#f4f0fa"/><rect x="13" y="8" width="2" height="1" fill="#cfcae0"/><rect x="15" y="8" width="1" height="1" fill="#2e120c"/><rect x="16" y="8" width="1" height="1" fill="#4a2016"/><rect x="0" y="9" width="1" height="1" fill="#4a2016"/><rect x="1" y="9" width="1" height="1" fill="#2e120c"/><rect x="2" y="9" width="1" height="1" fill="#cfcae0"/><rect x="3" y="9" width="11" height="1" fill="#f4f0fa"/><rect x="14" y="9" width="1" height="1" fill="#cfcae0"/><rect x="15" y="9" width="1" height="1" fill="#2e120c"/><rect x="16" y="9" width="1" height="1" fill="#4a2016"/><rect x="0" y="10" width="1" height="1" fill="#4a2016"/><rect x="1" y="10" width="1" height="1" fill="#2e120c"/><rect x="2" y="10" width="1" height="1" fill="#6f8a8a"/><rect x="3" y="10" width="1" height="1" fill="#cfcae0"/><rect x="4" y="10" width="3" height="1" fill="#f4f0fa"/><rect x="7" y="10" width="2" height="1" fill="#0c0c0c"/><rect x="9" y="10" width="4" height="1" fill="#f4f0fa"/><rect x="13" y="10" width="1" height="1" fill="#cfcae0"/><rect x="14" y="10" width="1" height="1" fill="#6f8a8a"/><rect x="15" y="10" width="1" height="1" fill="#2e120c"/><rect x="16" y="10" width="1" height="1" fill="#4a2016"/><rect x="0" y="11" width="1" height="1" fill="#4a2016"/><rect x="1" y="11" width="1" height="1" fill="#2e120c"/><rect x="2" y="11" width="1" height="1" fill="#cfcae0"/><rect x="3" y="11" width="4" height="1" fill="#f4f0fa"/><rect x="7" y="11" width="3" height="1" fill="#0c0c0c"/><rect x="10" y="11" width="4" height="1" fill="#f4f0fa"/><rect x="14" y="11" width="1" height="1" fill="#cfcae0"/><rect x="15" y="11" width="1" height="1" fill="#2e120c"/><rect x="16" y="11" width="1" height="1" fill="#4a2016"/><rect x="0" y="12" width="1" height="1" fill="#4a2016"/><rect x="1" y="12" width="1" height="1" fill="#2e120c"/><rect x="2" y="12" width="1" height="1" fill="#6f8a8a"/><rect x="3" y="12" width="11" height="1" fill="#f4f0fa"/><rect x="14" y="12" width="1" height="1" fill="#6f8a8a"/><rect x="15" y="12" width="1" height="1" fill="#2e120c"/><rect x="16" y="12" width="1" height="1" fill="#4a2016"/><rect x="0" y="13" width="1" height="1" fill="#4a2016"/><rect x="1" y="13" width="1" height="1" fill="#2e120c"/><rect x="2" y="13" width="1" height="1" fill="#4a2016"/><rect x="3" y="13" width="1" height="1" fill="#cfcae0"/><rect x="4" y="13" width="9" height="1" fill="#f4f0fa"/><rect x="13" y="13" width="1" height="1" fill="#cfcae0"/><rect x="14" y="13" width="1" height="1" fill="#4a2016"/><rect x="15" y="13" width="1" height="1" fill="#2e120c"/><rect x="16" y="13" width="1" height="1" fill="#4a2016"/><rect x="0" y="14" width="1" height="1" fill="#4a2016"/><rect x="1" y="14" width="1" height="1" fill="#2e120c"/><rect x="2" y="14" width="1" height="1" fill="#a5501e"/><rect x="3" y="14" width="1" height="1" fill="#4a2016"/><rect x="4" y="14" width="9" height="1" fill="#7a6666"/><rect x="13" y="14" width="1" height="1" fill="#4a2016"/><rect x="14" y="14" width="1" height="1" fill="#a5501e"/><rect x="15" y="14" width="1" height="1" fill="#2e120c"/><rect x="16" y="14" width="1" height="1" fill="#4a2016"/><rect x="0" y="15" width="1" height="1" fill="#4a2016"/><rect x="1" y="15" width="1" height="1" fill="#2e120c"/><rect x="2" y="15" width="1" height="1" fill="#a5501e"/><rect x="3" y="15" width="11" height="1" fill="#6f8a8a"/><rect x="14" y="15" width="1" height="1" fill="#a5501e"/><rect x="15" y="15" width="1" height="1" fill="#2e120c"/><rect x="16" y="15" width="1" height="1" fill="#4a2016"/><rect x="0" y="16" width="1" height="1" fill="#4a2016"/><rect x="1" y="16" width="1" height="1" fill="#2e120c"/><rect x="2" y="16" width="1" height="1" fill="#4a2016"/><rect x="3" y="16" width="1" height="1" fill="#cfcae0"/><rect x="4" y="16" width="9" height="1" fill="#f4f0fa"/><rect x="13" y="16" width="1" height="1" fill="#cfcae0"/><rect x="14" y="16" width="1" height="1" fill="#4a2016"/><rect x="15" y="16" width="1" height="1" fill="#2e120c"/><rect x="16" y="16" width="1" height="1" fill="#4a2016"/><rect x="0" y="17" width="1" height="1" fill="#4a2016"/><rect x="1" y="17" width="1" height="1" fill="#2e120c"/><rect x="2" y="17" width="1" height="1" fill="#4a2016"/><rect x="3" y="17" width="11" height="1" fill="#f4f0fa"/><rect x="14" y="17" width="1" height="1" fill="#4a2016"/><rect x="15" y="17" width="1" height="1" fill="#2e120c"/><rect x="16" y="17" width="1" height="1" fill="#4a2016"/><rect x="0" y="18" width="1" height="1" fill="#7a6666"/><rect x="1" y="18" width="1" height="1" fill="#cfcae0"/><rect x="2" y="18" width="13" height="1" fill="#f4f0fa"/><rect x="15" y="18" width="1" height="1" fill="#cfcae0"/><rect x="16" y="18" width="1" height="1" fill="#7a6666"/><rect x="0" y="19" width="1" height="1" fill="#7a6666"/><rect x="1" y="19" width="4" height="1" fill="#f4f0fa"/><rect x="5" y="19" width="5" height="1" fill="#2e120c"/><rect x="10" y="19" width="6" height="1" fill="#f4f0fa"/><rect x="16" y="19" width="1" height="1" fill="#7a6666"/><rect x="0" y="20" width="1" height="1" fill="#7a6666"/><rect x="1" y="20" width="4" height="1" fill="#f4f0fa"/><rect x="5" y="20" width="6" height="1" fill="#2e120c"/><rect x="11" y="20" width="5" height="1" fill="#f4f0fa"/><rect x="16" y="20" width="1" height="1" fill="#7a6666"/><rect x="0" y="21" width="1" height="1" fill="#7a6666"/><rect x="1" y="21" width="4" height="1" fill="#f4f0fa"/><rect x="10" y="21" width="2" height="1" fill="#2e120c"/><rect x="12" y="21" width="4" height="1" fill="#f4f0fa"/><rect x="16" y="21" width="1" height="1" fill="#7a6666"/><rect x="1" y="22" width="3" height="1" fill="#f4f0fa"/><rect x="11" y="22" width="1" height="1" fill="#cfcae0"/><rect x="12" y="22" width="4" height="1" fill="#f4f0fa"/><rect x="16" y="22" width="1" height="1" fill="#7a6666"/><rect x="11" y="23" width="1" height="1" fill="#cfcae0"/><rect x="12" y="23" width="3" height="1" fill="#f4f0fa"/><rect x="15" y="23" width="1" height="1" fill="#7a6666"/></svg>
<svg class="a" style="left:747px;top:813px" width="17" height="25" viewBox="0 0 17 24" shape-rendering="crispEdges"><rect x="6" y="0" width="3" height="1" fill="#6f8a8a"/><rect x="5" y="1" width="2" height="1" fill="#6f8a8a"/><rect x="7" y="1" width="1" height="1" fill="#f4f0fa"/><rect x="8" y="1" width="2" height="1" fill="#6f8a8a"/><rect x="2" y="2" width="2" height="1" fill="#4a2016"/><rect x="6" y="2" width="4" height="1" fill="#4a2016"/><rect x="13" y="2" width="2" height="1" fill="#4a2016"/><rect x="2" y="3" width="13" height="1" fill="#4a2016"/><rect x="2" y="4" width="2" height="1" fill="#4a2016"/><rect x="4" y="4" width="3" height="1" fill="#f4f0fa"/><rect x="7" y="4" width="3" height="1" fill="#4a2016"/><rect x="10" y="4" width="3" height="1" fill="#f4f0fa"/><rect x="13" y="4" width="2" height="1" fill="#4a2016"/><rect x="0" y="5" width="4" height="1" fill="#4a2016"/><rect x="4" y="5" width="3" height="1" fill="#f4f0fa"/><rect x="7" y="5" width="3" height="1" fill="#4a2016"/><rect x="10" y="5" width="3" height="1" fill="#f4f0fa"/><rect x="13" y="5" width="4" height="1" fill="#4a2016"/><rect x="0" y="6" width="1" height="1" fill="#4a2016"/><rect x="1" y="6" width="1" height="1" fill="#2e120c"/><rect x="2" y="6" width="2" height="1" fill="#4a2016"/><rect x="4" y="6" width="9" height="1" fill="#f4f0fa"/><rect x="13" y="6" width="2" height="1" fill="#4a2016"/><rect x="15" y="6" width="1" height="1" fill="#2e120c"/><rect x="16" y="6" width="1" height="1" fill="#4a2016"/><rect x="0" y="7" width="1" height="1" fill="#4a2016"/><rect x="1" y="7" width="1" height="1" fill="#2e120c"/><rect x="2" y="7" width="2" height="1" fill="#4a2016"/><rect x="4" y="7" width="2" height="1" fill="#0c0c0c"/><rect x="6" y="7" width="5" height="1" fill="#f4f0fa"/><rect x="11" y="7" width="2" height="1" fill="#0c0c0c"/><rect x="13" y="7" width="2" height="1" fill="#4a2016"/><rect x="15" y="7" width="1" height="1" fill="#2e120c"/><rect x="16" y="7" width="1" height="1" fill="#4a2016"/><rect x="0" y="8" width="1" height="1" fill="#4a2016"/><rect x="1" y="8" width="1" height="1" fill="#2e120c"/><rect x="2" y="8" width="2" height="1" fill="#cfcae0"/><rect x="4" y="8" width="9" height="1" fill="#f4f0fa"/><rect x="13" y="8" width="2" height="1" fill="#cfcae0"/><rect x="15" y="8" width="1" height="1" fill="#2e120c"/><rect x="16" y="8" width="1" height="1" fill="#4a2016"/><rect x="0" y="9" width="1" height="1" fill="#4a2016"/><rect x="1" y="9" width="1" height="1" fill="#2e120c"/><rect x="2" y="9" width="1" height="1" fill="#cfcae0"/><rect x="3" y="9" width="11" height="1" fill="#f4f0fa"/><rect x="14" y="9" width="1" height="1" fill="#cfcae0"/><rect x="15" y="9" width="1" height="1" fill="#2e120c"/><rect x="16" y="9" width="1" height="1" fill="#4a2016"/><rect x="0" y="10" width="1" height="1" fill="#4a2016"/><rect x="1" y="10" width="1" height="1" fill="#2e120c"/><rect x="2" y="10" width="1" height="1" fill="#6f8a8a"/><rect x="3" y="10" width="1" height="1" fill="#cfcae0"/><rect x="4" y="10" width="3" height="1" fill="#f4f0fa"/><rect x="7" y="10" width="2" height="1" fill="#0c0c0c"/><rect x="9" y="10" width="4" height="1" fill="#f4f0fa"/><rect x="13" y="10" width="1" height="1" fill="#cfcae0"/><rect x="14" y="10" width="1" height="1" fill="#6f8a8a"/><rect x="15" y="10" width="1" height="1" fill="#2e120c"/><rect x="16" y="10" width="1" height="1" fill="#4a2016"/><rect x="0" y="11" width="1" height="1" fill="#4a2016"/><rect x="1" y="11" width="1" height="1" fill="#2e120c"/><rect x="2" y="11" width="1" height="1" fill="#cfcae0"/><rect x="3" y="11" width="4" height="1" fill="#f4f0fa"/><rect x="7" y="11" width="3" height="1" fill="#0c0c0c"/><rect x="10" y="11" width="4" height="1" fill="#f4f0fa"/><rect x="14" y="11" width="1" height="1" fill="#cfcae0"/><rect x="15" y="11" width="1" height="1" fill="#2e120c"/><rect x="16" y="11" width="1" height="1" fill="#4a2016"/><rect x="0" y="12" width="1" height="1" fill="#4a2016"/><rect x="1" y="12" width="1" height="1" fill="#2e120c"/><rect x="2" y="12" width="1" height="1" fill="#6f8a8a"/><rect x="3" y="12" width="11" height="1" fill="#f4f0fa"/><rect x="14" y="12" width="1" height="1" fill="#6f8a8a"/><rect x="15" y="12" width="1" height="1" fill="#2e120c"/><rect x="16" y="12" width="1" height="1" fill="#4a2016"/><rect x="0" y="13" width="1" height="1" fill="#4a2016"/><rect x="1" y="13" width="1" height="1" fill="#2e120c"/><rect x="2" y="13" width="1" height="1" fill="#4a2016"/><rect x="3" y="13" width="1" height="1" fill="#cfcae0"/><rect x="4" y="13" width="9" height="1" fill="#f4f0fa"/><rect x="13" y="13" width="1" height="1" fill="#cfcae0"/><rect x="14" y="13" width="1" height="1" fill="#4a2016"/><rect x="15" y="13" width="1" height="1" fill="#2e120c"/><rect x="16" y="13" width="1" height="1" fill="#4a2016"/><rect x="0" y="14" width="1" height="1" fill="#4a2016"/><rect x="1" y="14" width="1" height="1" fill="#2e120c"/><rect x="2" y="14" width="1" height="1" fill="#a5501e"/><rect x="3" y="14" width="1" height="1" fill="#4a2016"/><rect x="4" y="14" width="9" height="1" fill="#7a6666"/><rect x="13" y="14" width="1" height="1" fill="#4a2016"/><rect x="14" y="14" width="1" height="1" fill="#a5501e"/><rect x="15" y="14" width="1" height="1" fill="#2e120c"/><rect x="16" y="14" width="1" height="1" fill="#4a2016"/><rect x="0" y="15" width="1" height="1" fill="#4a2016"/><rect x="1" y="15" width="1" height="1" fill="#2e120c"/><rect x="2" y="15" width="1" height="1" fill="#a5501e"/><rect x="3" y="15" width="11" height="1" fill="#6f8a8a"/><rect x="14" y="15" width="1" height="1" fill="#a5501e"/><rect x="15" y="15" width="1" height="1" fill="#2e120c"/><rect x="16" y="15" width="1" height="1" fill="#4a2016"/><rect x="0" y="16" width="1" height="1" fill="#4a2016"/><rect x="1" y="16" width="1" height="1" fill="#2e120c"/><rect x="2" y="16" width="1" height="1" fill="#4a2016"/><rect x="3" y="16" width="1" height="1" fill="#cfcae0"/><rect x="4" y="16" width="9" height="1" fill="#f4f0fa"/><rect x="13" y="16" width="1" height="1" fill="#cfcae0"/><rect x="14" y="16" width="1" height="1" fill="#4a2016"/><rect x="15" y="16" width="1" height="1" fill="#2e120c"/><rect x="16" y="16" width="1" height="1" fill="#4a2016"/><rect x="0" y="17" width="1" height="1" fill="#4a2016"/><rect x="1" y="17" width="1" height="1" fill="#2e120c"/><rect x="2" y="17" width="1" height="1" fill="#4a2016"/><rect x="3" y="17" width="11" height="1" fill="#f4f0fa"/><rect x="14" y="17" width="1" height="1" fill="#4a2016"/><rect x="15" y="17" width="1" height="1" fill="#2e120c"/><rect x="16" y="17" width="1" height="1" fill="#4a2016"/><rect x="0" y="18" width="1" height="1" fill="#7a6666"/><rect x="1" y="18" width="1" height="1" fill="#cfcae0"/><rect x="2" y="18" width="13" height="1" fill="#f4f0fa"/><rect x="15" y="18" width="1" height="1" fill="#cfcae0"/><rect x="16" y="18" width="1" height="1" fill="#7a6666"/><rect x="0" y="19" width="1" height="1" fill="#7a6666"/><rect x="1" y="19" width="4" height="1" fill="#f4f0fa"/><rect x="5" y="19" width="5" height="1" fill="#2e120c"/><rect x="10" y="19" width="6" height="1" fill="#f4f0fa"/><rect x="16" y="19" width="1" height="1" fill="#7a6666"/><rect x="0" y="20" width="1" height="1" fill="#7a6666"/><rect x="1" y="20" width="4" height="1" fill="#f4f0fa"/><rect x="5" y="20" width="6" height="1" fill="#2e120c"/><rect x="11" y="20" width="5" height="1" fill="#f4f0fa"/><rect x="16" y="20" width="1" height="1" fill="#7a6666"/><rect x="0" y="21" width="1" height="1" fill="#7a6666"/><rect x="1" y="21" width="4" height="1" fill="#f4f0fa"/><rect x="10" y="21" width="2" height="1" fill="#2e120c"/><rect x="12" y="21" width="4" height="1" fill="#f4f0fa"/><rect x="16" y="21" width="1" height="1" fill="#7a6666"/><rect x="1" y="22" width="3" height="1" fill="#f4f0fa"/><rect x="11" y="22" width="1" height="1" fill="#cfcae0"/><rect x="12" y="22" width="4" height="1" fill="#f4f0fa"/><rect x="16" y="22" width="1" height="1" fill="#7a6666"/><rect x="11" y="23" width="1" height="1" fill="#cfcae0"/><rect x="12" y="23" width="3" height="1" fill="#f4f0fa"/><rect x="15" y="23" width="1" height="1" fill="#7a6666"/></svg>
<svg class="a" style="left:903px;top:813px" width="17" height="25" viewBox="0 0 17 24" shape-rendering="crispEdges"><rect x="6" y="0" width="3" height="1" fill="#6f8a8a"/><rect x="5" y="1" width="2" height="1" fill="#6f8a8a"/><rect x="7" y="1" width="1" height="1" fill="#f4f0fa"/><rect x="8" y="1" width="2" height="1" fill="#6f8a8a"/><rect x="2" y="2" width="2" height="1" fill="#4a2016"/><rect x="6" y="2" width="4" height="1" fill="#4a2016"/><rect x="13" y="2" width="2" height="1" fill="#4a2016"/><rect x="2" y="3" width="13" height="1" fill="#4a2016"/><rect x="2" y="4" width="2" height="1" fill="#4a2016"/><rect x="4" y="4" width="3" height="1" fill="#f4f0fa"/><rect x="7" y="4" width="3" height="1" fill="#4a2016"/><rect x="10" y="4" width="3" height="1" fill="#f4f0fa"/><rect x="13" y="4" width="2" height="1" fill="#4a2016"/><rect x="0" y="5" width="4" height="1" fill="#4a2016"/><rect x="4" y="5" width="3" height="1" fill="#f4f0fa"/><rect x="7" y="5" width="3" height="1" fill="#4a2016"/><rect x="10" y="5" width="3" height="1" fill="#f4f0fa"/><rect x="13" y="5" width="4" height="1" fill="#4a2016"/><rect x="0" y="6" width="1" height="1" fill="#4a2016"/><rect x="1" y="6" width="1" height="1" fill="#2e120c"/><rect x="2" y="6" width="2" height="1" fill="#4a2016"/><rect x="4" y="6" width="9" height="1" fill="#f4f0fa"/><rect x="13" y="6" width="2" height="1" fill="#4a2016"/><rect x="15" y="6" width="1" height="1" fill="#2e120c"/><rect x="16" y="6" width="1" height="1" fill="#4a2016"/><rect x="0" y="7" width="1" height="1" fill="#4a2016"/><rect x="1" y="7" width="1" height="1" fill="#2e120c"/><rect x="2" y="7" width="2" height="1" fill="#4a2016"/><rect x="4" y="7" width="2" height="1" fill="#0c0c0c"/><rect x="6" y="7" width="5" height="1" fill="#f4f0fa"/><rect x="11" y="7" width="2" height="1" fill="#0c0c0c"/><rect x="13" y="7" width="2" height="1" fill="#4a2016"/><rect x="15" y="7" width="1" height="1" fill="#2e120c"/><rect x="16" y="7" width="1" height="1" fill="#4a2016"/><rect x="0" y="8" width="1" height="1" fill="#4a2016"/><rect x="1" y="8" width="1" height="1" fill="#2e120c"/><rect x="2" y="8" width="2" height="1" fill="#cfcae0"/><rect x="4" y="8" width="9" height="1" fill="#f4f0fa"/><rect x="13" y="8" width="2" height="1" fill="#cfcae0"/><rect x="15" y="8" width="1" height="1" fill="#2e120c"/><rect x="16" y="8" width="1" height="1" fill="#4a2016"/><rect x="0" y="9" width="1" height="1" fill="#4a2016"/><rect x="1" y="9" width="1" height="1" fill="#2e120c"/><rect x="2" y="9" width="1" height="1" fill="#cfcae0"/><rect x="3" y="9" width="11" height="1" fill="#f4f0fa"/><rect x="14" y="9" width="1" height="1" fill="#cfcae0"/><rect x="15" y="9" width="1" height="1" fill="#2e120c"/><rect x="16" y="9" width="1" height="1" fill="#4a2016"/><rect x="0" y="10" width="1" height="1" fill="#4a2016"/><rect x="1" y="10" width="1" height="1" fill="#2e120c"/><rect x="2" y="10" width="1" height="1" fill="#6f8a8a"/><rect x="3" y="10" width="1" height="1" fill="#cfcae0"/><rect x="4" y="10" width="3" height="1" fill="#f4f0fa"/><rect x="7" y="10" width="2" height="1" fill="#0c0c0c"/><rect x="9" y="10" width="4" height="1" fill="#f4f0fa"/><rect x="13" y="10" width="1" height="1" fill="#cfcae0"/><rect x="14" y="10" width="1" height="1" fill="#6f8a8a"/><rect x="15" y="10" width="1" height="1" fill="#2e120c"/><rect x="16" y="10" width="1" height="1" fill="#4a2016"/><rect x="0" y="11" width="1" height="1" fill="#4a2016"/><rect x="1" y="11" width="1" height="1" fill="#2e120c"/><rect x="2" y="11" width="1" height="1" fill="#cfcae0"/><rect x="3" y="11" width="4" height="1" fill="#f4f0fa"/><rect x="7" y="11" width="3" height="1" fill="#0c0c0c"/><rect x="10" y="11" width="4" height="1" fill="#f4f0fa"/><rect x="14" y="11" width="1" height="1" fill="#cfcae0"/><rect x="15" y="11" width="1" height="1" fill="#2e120c"/><rect x="16" y="11" width="1" height="1" fill="#4a2016"/><rect x="0" y="12" width="1" height="1" fill="#4a2016"/><rect x="1" y="12" width="1" height="1" fill="#2e120c"/><rect x="2" y="12" width="1" height="1" fill="#6f8a8a"/><rect x="3" y="12" width="11" height="1" fill="#f4f0fa"/><rect x="14" y="12" width="1" height="1" fill="#6f8a8a"/><rect x="15" y="12" width="1" height="1" fill="#2e120c"/><rect x="16" y="12" width="1" height="1" fill="#4a2016"/><rect x="0" y="13" width="1" height="1" fill="#4a2016"/><rect x="1" y="13" width="1" height="1" fill="#2e120c"/><rect x="2" y="13" width="1" height="1" fill="#4a2016"/><rect x="3" y="13" width="1" height="1" fill="#cfcae0"/><rect x="4" y="13" width="9" height="1" fill="#f4f0fa"/><rect x="13" y="13" width="1" height="1" fill="#cfcae0"/><rect x="14" y="13" width="1" height="1" fill="#4a2016"/><rect x="15" y="13" width="1" height="1" fill="#2e120c"/><rect x="16" y="13" width="1" height="1" fill="#4a2016"/><rect x="0" y="14" width="1" height="1" fill="#4a2016"/><rect x="1" y="14" width="1" height="1" fill="#2e120c"/><rect x="2" y="14" width="1" height="1" fill="#a5501e"/><rect x="3" y="14" width="1" height="1" fill="#4a2016"/><rect x="4" y="14" width="9" height="1" fill="#7a6666"/><rect x="13" y="14" width="1" height="1" fill="#4a2016"/><rect x="14" y="14" width="1" height="1" fill="#a5501e"/><rect x="15" y="14" width="1" height="1" fill="#2e120c"/><rect x="16" y="14" width="1" height="1" fill="#4a2016"/><rect x="0" y="15" width="1" height="1" fill="#4a2016"/><rect x="1" y="15" width="1" height="1" fill="#2e120c"/><rect x="2" y="15" width="1" height="1" fill="#a5501e"/><rect x="3" y="15" width="11" height="1" fill="#6f8a8a"/><rect x="14" y="15" width="1" height="1" fill="#a5501e"/><rect x="15" y="15" width="1" height="1" fill="#2e120c"/><rect x="16" y="15" width="1" height="1" fill="#4a2016"/><rect x="0" y="16" width="1" height="1" fill="#4a2016"/><rect x="1" y="16" width="1" height="1" fill="#2e120c"/><rect x="2" y="16" width="1" height="1" fill="#4a2016"/><rect x="3" y="16" width="1" height="1" fill="#cfcae0"/><rect x="4" y="16" width="9" height="1" fill="#f4f0fa"/><rect x="13" y="16" width="1" height="1" fill="#cfcae0"/><rect x="14" y="16" width="1" height="1" fill="#4a2016"/><rect x="15" y="16" width="1" height="1" fill="#2e120c"/><rect x="16" y="16" width="1" height="1" fill="#4a2016"/><rect x="0" y="17" width="1" height="1" fill="#4a2016"/><rect x="1" y="17" width="1" height="1" fill="#2e120c"/><rect x="2" y="17" width="1" height="1" fill="#4a2016"/><rect x="3" y="17" width="11" height="1" fill="#f4f0fa"/><rect x="14" y="17" width="1" height="1" fill="#4a2016"/><rect x="15" y="17" width="1" height="1" fill="#2e120c"/><rect x="16" y="17" width="1" height="1" fill="#4a2016"/><rect x="0" y="18" width="1" height="1" fill="#7a6666"/><rect x="1" y="18" width="1" height="1" fill="#cfcae0"/><rect x="2" y="18" width="13" height="1" fill="#f4f0fa"/><rect x="15" y="18" width="1" height="1" fill="#cfcae0"/><rect x="16" y="18" width="1" height="1" fill="#7a6666"/><rect x="0" y="19" width="1" height="1" fill="#7a6666"/><rect x="1" y="19" width="4" height="1" fill="#f4f0fa"/><rect x="5" y="19" width="5" height="1" fill="#2e120c"/><rect x="10" y="19" width="6" height="1" fill="#f4f0fa"/><rect x="16" y="19" width="1" height="1" fill="#7a6666"/><rect x="0" y="20" width="1" height="1" fill="#7a6666"/><rect x="1" y="20" width="4" height="1" fill="#f4f0fa"/><rect x="5" y="20" width="6" height="1" fill="#2e120c"/><rect x="11" y="20" width="5" height="1" fill="#f4f0fa"/><rect x="16" y="20" width="1" height="1" fill="#7a6666"/><rect x="0" y="21" width="1" height="1" fill="#7a6666"/><rect x="1" y="21" width="4" height="1" fill="#f4f0fa"/><rect x="10" y="21" width="2" height="1" fill="#2e120c"/><rect x="12" y="21" width="4" height="1" fill="#f4f0fa"/><rect x="16" y="21" width="1" height="1" fill="#7a6666"/><rect x="1" y="22" width="3" height="1" fill="#f4f0fa"/><rect x="11" y="22" width="1" height="1" fill="#cfcae0"/><rect x="12" y="22" width="4" height="1" fill="#f4f0fa"/><rect x="16" y="22" width="1" height="1" fill="#7a6666"/><rect x="11" y="23" width="1" height="1" fill="#cfcae0"/><rect x="12" y="23" width="3" height="1" fill="#f4f0fa"/><rect x="15" y="23" width="1" height="1" fill="#7a6666"/></svg>
<svg class="a" style="left:1059px;top:812px" width="17" height="25" viewBox="0 0 17 24" shape-rendering="crispEdges"><rect x="6" y="0" width="3" height="1" fill="#6f8a8a"/><rect x="5" y="1" width="2" height="1" fill="#6f8a8a"/><rect x="7" y="1" width="1" height="1" fill="#f4f0fa"/><rect x="8" y="1" width="2" height="1" fill="#6f8a8a"/><rect x="2" y="2" width="2" height="1" fill="#4a2016"/><rect x="6" y="2" width="4" height="1" fill="#4a2016"/><rect x="13" y="2" width="2" height="1" fill="#4a2016"/><rect x="2" y="3" width="13" height="1" fill="#4a2016"/><rect x="2" y="4" width="2" height="1" fill="#4a2016"/><rect x="4" y="4" width="3" height="1" fill="#f4f0fa"/><rect x="7" y="4" width="3" height="1" fill="#4a2016"/><rect x="10" y="4" width="3" height="1" fill="#f4f0fa"/><rect x="13" y="4" width="2" height="1" fill="#4a2016"/><rect x="0" y="5" width="4" height="1" fill="#4a2016"/><rect x="4" y="5" width="3" height="1" fill="#f4f0fa"/><rect x="7" y="5" width="3" height="1" fill="#4a2016"/><rect x="10" y="5" width="3" height="1" fill="#f4f0fa"/><rect x="13" y="5" width="4" height="1" fill="#4a2016"/><rect x="0" y="6" width="1" height="1" fill="#4a2016"/><rect x="1" y="6" width="1" height="1" fill="#2e120c"/><rect x="2" y="6" width="2" height="1" fill="#4a2016"/><rect x="4" y="6" width="9" height="1" fill="#f4f0fa"/><rect x="13" y="6" width="2" height="1" fill="#4a2016"/><rect x="15" y="6" width="1" height="1" fill="#2e120c"/><rect x="16" y="6" width="1" height="1" fill="#4a2016"/><rect x="0" y="7" width="1" height="1" fill="#4a2016"/><rect x="1" y="7" width="1" height="1" fill="#2e120c"/><rect x="2" y="7" width="2" height="1" fill="#4a2016"/><rect x="4" y="7" width="2" height="1" fill="#0c0c0c"/><rect x="6" y="7" width="5" height="1" fill="#f4f0fa"/><rect x="11" y="7" width="2" height="1" fill="#0c0c0c"/><rect x="13" y="7" width="2" height="1" fill="#4a2016"/><rect x="15" y="7" width="1" height="1" fill="#2e120c"/><rect x="16" y="7" width="1" height="1" fill="#4a2016"/><rect x="0" y="8" width="1" height="1" fill="#4a2016"/><rect x="1" y="8" width="1" height="1" fill="#2e120c"/><rect x="2" y="8" width="2" height="1" fill="#cfcae0"/><rect x="4" y="8" width="9" height="1" fill="#f4f0fa"/><rect x="13" y="8" width="2" height="1" fill="#cfcae0"/><rect x="15" y="8" width="1" height="1" fill="#2e120c"/><rect x="16" y="8" width="1" height="1" fill="#4a2016"/><rect x="0" y="9" width="1" height="1" fill="#4a2016"/><rect x="1" y="9" width="1" height="1" fill="#2e120c"/><rect x="2" y="9" width="1" height="1" fill="#cfcae0"/><rect x="3" y="9" width="11" height="1" fill="#f4f0fa"/><rect x="14" y="9" width="1" height="1" fill="#cfcae0"/><rect x="15" y="9" width="1" height="1" fill="#2e120c"/><rect x="16" y="9" width="1" height="1" fill="#4a2016"/><rect x="0" y="10" width="1" height="1" fill="#4a2016"/><rect x="1" y="10" width="1" height="1" fill="#2e120c"/><rect x="2" y="10" width="1" height="1" fill="#6f8a8a"/><rect x="3" y="10" width="1" height="1" fill="#cfcae0"/><rect x="4" y="10" width="3" height="1" fill="#f4f0fa"/><rect x="7" y="10" width="2" height="1" fill="#0c0c0c"/><rect x="9" y="10" width="4" height="1" fill="#f4f0fa"/><rect x="13" y="10" width="1" height="1" fill="#cfcae0"/><rect x="14" y="10" width="1" height="1" fill="#6f8a8a"/><rect x="15" y="10" width="1" height="1" fill="#2e120c"/><rect x="16" y="10" width="1" height="1" fill="#4a2016"/><rect x="0" y="11" width="1" height="1" fill="#4a2016"/><rect x="1" y="11" width="1" height="1" fill="#2e120c"/><rect x="2" y="11" width="1" height="1" fill="#cfcae0"/><rect x="3" y="11" width="4" height="1" fill="#f4f0fa"/><rect x="7" y="11" width="3" height="1" fill="#0c0c0c"/><rect x="10" y="11" width="4" height="1" fill="#f4f0fa"/><rect x="14" y="11" width="1" height="1" fill="#cfcae0"/><rect x="15" y="11" width="1" height="1" fill="#2e120c"/><rect x="16" y="11" width="1" height="1" fill="#4a2016"/><rect x="0" y="12" width="1" height="1" fill="#4a2016"/><rect x="1" y="12" width="1" height="1" fill="#2e120c"/><rect x="2" y="12" width="1" height="1" fill="#6f8a8a"/><rect x="3" y="12" width="11" height="1" fill="#f4f0fa"/><rect x="14" y="12" width="1" height="1" fill="#6f8a8a"/><rect x="15" y="12" width="1" height="1" fill="#2e120c"/><rect x="16" y="12" width="1" height="1" fill="#4a2016"/><rect x="0" y="13" width="1" height="1" fill="#4a2016"/><rect x="1" y="13" width="1" height="1" fill="#2e120c"/><rect x="2" y="13" width="1" height="1" fill="#4a2016"/><rect x="3" y="13" width="1" height="1" fill="#cfcae0"/><rect x="4" y="13" width="9" height="1" fill="#f4f0fa"/><rect x="13" y="13" width="1" height="1" fill="#cfcae0"/><rect x="14" y="13" width="1" height="1" fill="#4a2016"/><rect x="15" y="13" width="1" height="1" fill="#2e120c"/><rect x="16" y="13" width="1" height="1" fill="#4a2016"/><rect x="0" y="14" width="1" height="1" fill="#4a2016"/><rect x="1" y="14" width="1" height="1" fill="#2e120c"/><rect x="2" y="14" width="1" height="1" fill="#a5501e"/><rect x="3" y="14" width="1" height="1" fill="#4a2016"/><rect x="4" y="14" width="9" height="1" fill="#7a6666"/><rect x="13" y="14" width="1" height="1" fill="#4a2016"/><rect x="14" y="14" width="1" height="1" fill="#a5501e"/><rect x="15" y="14" width="1" height="1" fill="#2e120c"/><rect x="16" y="14" width="1" height="1" fill="#4a2016"/><rect x="0" y="15" width="1" height="1" fill="#4a2016"/><rect x="1" y="15" width="1" height="1" fill="#2e120c"/><rect x="2" y="15" width="1" height="1" fill="#a5501e"/><rect x="3" y="15" width="11" height="1" fill="#6f8a8a"/><rect x="14" y="15" width="1" height="1" fill="#a5501e"/><rect x="15" y="15" width="1" height="1" fill="#2e120c"/><rect x="16" y="15" width="1" height="1" fill="#4a2016"/><rect x="0" y="16" width="1" height="1" fill="#4a2016"/><rect x="1" y="16" width="1" height="1" fill="#2e120c"/><rect x="2" y="16" width="1" height="1" fill="#4a2016"/><rect x="3" y="16" width="1" height="1" fill="#cfcae0"/><rect x="4" y="16" width="9" height="1" fill="#f4f0fa"/><rect x="13" y="16" width="1" height="1" fill="#cfcae0"/><rect x="14" y="16" width="1" height="1" fill="#4a2016"/><rect x="15" y="16" width="1" height="1" fill="#2e120c"/><rect x="16" y="16" width="1" height="1" fill="#4a2016"/><rect x="0" y="17" width="1" height="1" fill="#4a2016"/><rect x="1" y="17" width="1" height="1" fill="#2e120c"/><rect x="2" y="17" width="1" height="1" fill="#4a2016"/><rect x="3" y="17" width="11" height="1" fill="#f4f0fa"/><rect x="14" y="17" width="1" height="1" fill="#4a2016"/><rect x="15" y="17" width="1" height="1" fill="#2e120c"/><rect x="16" y="17" width="1" height="1" fill="#4a2016"/><rect x="0" y="18" width="1" height="1" fill="#7a6666"/><rect x="1" y="18" width="1" height="1" fill="#cfcae0"/><rect x="2" y="18" width="13" height="1" fill="#f4f0fa"/><rect x="15" y="18" width="1" height="1" fill="#cfcae0"/><rect x="16" y="18" width="1" height="1" fill="#7a6666"/><rect x="0" y="19" width="1" height="1" fill="#7a6666"/><rect x="1" y="19" width="4" height="1" fill="#f4f0fa"/><rect x="5" y="19" width="5" height="1" fill="#2e120c"/><rect x="10" y="19" width="6" height="1" fill="#f4f0fa"/><rect x="16" y="19" width="1" height="1" fill="#7a6666"/><rect x="0" y="20" width="1" height="1" fill="#7a6666"/><rect x="1" y="20" width="4" height="1" fill="#f4f0fa"/><rect x="5" y="20" width="6" height="1" fill="#2e120c"/><rect x="11" y="20" width="5" height="1" fill="#f4f0fa"/><rect x="16" y="20" width="1" height="1" fill="#7a6666"/><rect x="0" y="21" width="1" height="1" fill="#7a6666"/><rect x="1" y="21" width="4" height="1" fill="#f4f0fa"/><rect x="10" y="21" width="2" height="1" fill="#2e120c"/><rect x="12" y="21" width="4" height="1" fill="#f4f0fa"/><rect x="16" y="21" width="1" height="1" fill="#7a6666"/><rect x="1" y="22" width="3" height="1" fill="#f4f0fa"/><rect x="11" y="22" width="1" height="1" fill="#cfcae0"/><rect x="12" y="22" width="4" height="1" fill="#f4f0fa"/><rect x="16" y="22" width="1" height="1" fill="#7a6666"/><rect x="11" y="23" width="1" height="1" fill="#cfcae0"/><rect x="12" y="23" width="3" height="1" fill="#f4f0fa"/><rect x="15" y="23" width="1" height="1" fill="#7a6666"/></svg>
<div class="t" style="left:1012px;top:730.30px;font-size:15px;color:#cdcfd2;">Длительность кадра:</div>
<div class="a" style="left:1164px;top:724px;width:63px;height:28px;background:#21262e;border-radius:2px;box-shadow:inset 0 -2px 0 #1a1d23"></div>
<div class="t" style="left:1170px;top:730.30px;font-size:15px;color:#cdcfd2;">× 1</div>
<div class="a" style="left:435px;top:724px;width:63px;height:28px;background:#21262e;border-radius:2px;box-shadow:inset 0 -2px 0 #1a1d23"></div>
<div class="t" style="left:441px;top:731.15px;font-size:14px;color:#cdcfd2;">10 FPS</div>
<div class="t" style="left:308px;top:1005.30px;font-size:15px;color:#cdcfd2;letter-spacing:-0.192px;">Вывод</div>
<div class="t" style="left:369px;top:1005.30px;font-size:15px;color:#cdcfd2;letter-spacing:-0.189px;">Отладчик</div>
<div class="t" style="left:452px;top:1005.30px;font-size:15px;color:#cdcfd2;letter-spacing:-0.103px;">Результаты поиска</div>
<div class="t" style="left:598px;top:1005.30px;font-size:15px;color:#cdcfd2;letter-spacing:-0.263px;">Аудио</div>
<div class="t" style="left:656px;top:1005.30px;font-size:15px;color:#cdcfd2;letter-spacing:0.010px;">Анимация</div>
<div class="t" style="left:743px;top:1005.30px;font-size:15px;color:#cdcfd2;letter-spacing:-0.150px;">Редактор шейдеров</div>
<div class="t" style="left:897px;top:1005.30px;font-size:15px;color:#70bafa;letter-spacing:0.011px;">Кадры анимации</div>
<div class="t" style="left:1518px;top:1003.72px;font-size:14.5px;color:#9a9da2;">4.2.2.stable</div>
<div class="a" style="left:1642px;top:70px;width:270px;height:962px;background:#363d4a;border-radius:3px"></div>
<div class="a" style="left:1739px;top:70px;width:173px;height:28px;background:#252b34;border-radius:0 3px 0 0"></div>
<div class="a" style="left:1642px;top:70px;width:97px;height:2px;background:#5fa3da;"></div>
<div class="t" style="left:1653px;top:76.30px;font-size:15px;color:#cdcfd2;">Инспектор</div>
<div class="t" style="left:1750px;top:76.30px;font-size:15px;color:#8a8e94;">Узел</div>
<div class="t" style="left:1804px;top:76.30px;font-size:15px;color:#8a8e94;">История</div>
<div class="a" style="left:1646px;top:134px;width:230px;height:30px;background:#21262e;border-radius:2px;box-shadow:inset 0 -2px 0 #1a1d23"></div>
<div class="t" style="left:1674px;top:142.30px;font-size:15px;color:#cdcfd2;">AnimatedSprite2D</div>
<div class="a" style="left:1646px;top:168px;width:230px;height:28px;background:#21262e;border-radius:2px;box-shadow:inset 0 -2px 0 #1a1d23"></div>
<div class="t" style="left:1652px;top:174.30px;font-size:15px;color:#9a9da2;">Фильтр свойств</div>
<div class="a" style="left:1646px;top:201px;width:262px;height:827px;background:#21262e;border-radius:2px"></div>
<svg class="a" style="left:810px;top:38px;" width="16" height="16" viewBox="0 0 16 16"><path d="M3 15l-2.5-3.5h1.5V4h9.5V2l3.5 3-3.5 3V6H4v5.5h1.5z" fill="#70bafa"/></svg>
<svg class="a" style="left:866px;top:38px;" width="16" height="16" viewBox="0 0 16 16"><path d="M3.5 1L0.8 4.8h1.8V13.2h1.8V4.8h1.8z" fill="#e0e0e0"/><path d="M15 12.2l-3.8-2.7v1.8H3v1.8h8.2v1.8z" fill="#e0e0e0"/><path d="M4 12L12 4" stroke="#e0e0e0" stroke-width="2"/><path d="M8.5 2H14.5V8z" fill="#e0e0e0"/></svg>
<svg class="a" style="left:922px;top:38px;" width="16" height="16" viewBox="0 0 16 16"><rect x="3.6" y="1" width="7.6" height="14" rx="1.2" fill="#e0e0e0"/><rect x="8" y="1" width="7" height="3.6" rx="1.2" fill="#e0e0e0"/><rect x="0.6" y="10.8" width="4.6" height="4.2" rx="1.2" fill="#e0e0e0"/><path d="M10.2 4.6h1v1h-1z" fill="#bbb"/></svg>
<svg class="a" style="left:1002px;top:38px;" width="16" height="16" viewBox="0 0 16 16"><path d="M7 1h2v7h2.5L8 11.5 4.5 8H7z" fill="#e0e0e0"/><path d="M1 9h2v4h10V9h2v6H1z" fill="#e0e0e0"/></svg>
<svg class="a" style="left:1547px;top:38px;" width="16" height="16" viewBox="0 0 16 16"><path d="M3.6 2.6l10 5.4-10 5.4z" fill="#e0e0e0"/></svg>
<svg class="a" style="left:1579px;top:38px;" width="16" height="16" viewBox="0 0 16 16"><rect x="3.5" y="3" width="3" height="10" rx="0.8" fill="#6e7178"/><rect x="9.5" y="3" width="3" height="10" rx="0.8" fill="#6e7178"/></svg>
<svg class="a" style="left:1611px;top:38px;" width="16" height="16" viewBox="0 0 16 16"><rect x="3" y="3" width="10" height="10" rx="1" fill="#6e7178"/></svg>
<svg class="a" style="left:1643px;top:38px;" width="16" height="16" viewBox="0 0 16 16"><path d="M2.5 2h11c.6 0 1 .4 1 1v6.5c0 .6-.4 1-1 1H9v1.5h2.5v1.5h-7V12H7v-1.5H2.5c-.6 0-1-.4-1-1V3c0-.6.4-1 1-1z" fill="#6e7178"/><path d="M6.5 3.6l4 2.4-4 2.4z" fill="#252b34"/></svg>
<svg class="a" style="left:1676px;top:38px;" width="16" height="16" viewBox="0 0 16 16"><path d="M1.5 2.5h1.6v1.6H1.5zM5 2.2h1.6v1.6H5zM8.5 2h1.6v1.6H8.5zM12 1.8h1.6v1.6H12z" fill="#e0e0e0"/><path d="M1.5 5.5h13v8.5h-12c-.6 0-1-.4-1-1z" fill="#e0e0e0"/><path d="M6.2 7.2l4.6 2.8-4.6 2.8z" fill="#252b34"/></svg>
<svg class="a" style="left:1708px;top:38px;" width="16" height="16" viewBox="0 0 16 16"><path d="M1.5 2.5h1.6v1.6H1.5zM5 2.2h1.6v1.6H5zM8.5 2h1.6v1.6H8.5zM12 1.8h1.6v1.6H12z" fill="#e0e0e0"/><path fill-rule="evenodd" d="M1.5 5.5h13v8.5h-12c-.6 0-1-.4-1-1zM3.2 7.4v4.9h9.6V8.8H7.6L6.4 7.4z" fill="#e0e0e0"/></svg>
<svg class="a" style="left:1740px;top:38px;" width="16" height="16" viewBox="0 0 16 16"><circle cx="7.5" cy="7.5" r="6.3" fill="#6e7178"/><g fill="#252b34"><circle cx="7.5" cy="4" r="1.4"/><circle cx="7.5" cy="11" r="1.4"/><circle cx="4" cy="7.5" r="1.4"/><circle cx="11" cy="7.5" r="1.4"/><circle cx="5" cy="5" r="1.1"/><circle cx="10" cy="10" r="1.1"/><circle cx="5" cy="10" r="1.1"/><circle cx="10" cy="5" r="1.1"/></g><path d="M11.5 12.5l2.5 2.5" stroke="#6e7178" stroke-width="1.8"/></svg>
<svg class="a" style="left:1895px;top:39px;" width="14" height="14" viewBox="0 0 16 16"><path d="M3 5.5l5 5 5-5" fill="none" stroke="#70bafa" stroke-width="2"/></svg>
<svg class="a" style="left:18px;top:110px;" width="16" height="16" viewBox="0 0 16 16"><path d="M7 1h2v6h6v2H9v6H7V9H1V7h6z" fill="#e0e0e0"/></svg>
<svg class="a" style="left:49px;top:110px;" width="16" height="16" viewBox="0 0 16 16"><g transform="rotate(-45 8 8)" fill="none" stroke="#e0e0e0" stroke-width="2"><rect x="1" y="5" width="8" height="6" rx="3"/><rect x="7" y="5" width="8" height="6" rx="3"/></g></svg>
<svg class="a" style="left:188px;top:110px;" width="16" height="16" viewBox="0 0 16 16"><circle cx="6.5" cy="6.5" r="4.3" fill="none" stroke="#e0e0e0" stroke-width="2"/><path d="M9.5 9.5L14.5 14.5" stroke="#e0e0e0" stroke-width="2.2" stroke-linecap="round"/></svg>
<svg class="a" style="left:221px;top:110px;" width="16" height="16" viewBox="0 0 16 16"><path d="M6 1h7c1.2 0 2 .8 2 2v1h-3v6h-1v5H3c-1.2 0-2-.8-2-2v-1h3V3c0-1.2.8-2 2-2z" fill="#e0e0e0"/><path d="M11 9h2v2h2v2h-2v2h-2v-2H9v-2h2z" fill="#5fff97"/><path d="M9 9h6v6H9z" fill="none"/></svg>
<svg class="a" style="left:252px;top:110px;" width="16" height="16" viewBox="0 0 16 16"><circle cx="8" cy="2.5" r="1.9" fill="#e0e0e0"/><circle cx="8" cy="8" r="1.9" fill="#e0e0e0"/><circle cx="8" cy="13.5" r="1.9" fill="#e0e0e0"/></svg>
<svg class="a" style="left:262px;top:76px;" width="16" height="16" viewBox="0 0 16 16"><circle cx="8" cy="2.5" r="1.9" fill="#8a8e94"/><circle cx="8" cy="8" r="1.9" fill="#8a8e94"/><circle cx="8" cy="13.5" r="1.9" fill="#8a8e94"/></svg>
<svg class="a" style="left:14px;top:147px;" width="16" height="16" viewBox="0 0 16 16"><path d="M3 6l5 4.5 5-4.5" fill="none" stroke="#8a8e94" stroke-width="1.7"/></svg>
<svg class="a" style="left:32px;top:147px;" width="16" height="16" viewBox="0 0 16 16"><path fill="#8da5f3" d="M1 1h4v2H3v2H1zM11 1h4v4h-2V3h-2zM1 11h2v2h2v2H1zM13 11h2v4h-4v-2h2z"/><path fill="#8da5f3" fill-rule="evenodd" d="M4 4h8v8H4zM6 6v4h4V6z"/></svg>
<svg class="a" style="left:226px;top:147px;" width="16" height="16" viewBox="0 0 16 16"><path d="M1 1h2v2H1zM13 1h2v2h-2zM1 13h2v2H1zM13 13h2v2h-2z" fill="#fff"/><path d="M7 2h6v1h-4v4h5v-4h1v6H9v6H3V9h4z" fill="#808080"/><rect x="3" y="7" width="6" height="6" fill="#808080"/></svg>
<svg class="a" style="left:250px;top:147px;" width="16" height="16" viewBox="0 0 16 16"><path fill-rule="evenodd" fill="#e0e0e0" d="M8 2.2C4.2 2.2 1.4 5 0.6 8c.8 3 3.6 5.8 7.4 5.8s6.6-2.8 7.4-5.8C14.6 5 11.8 2.2 8 2.2zM8 4.5c2.4 0 4.3 1.6 4.9 3.5-.6 1.9-2.5 3.5-4.9 3.5S3.7 9.9 3.1 8C3.7 6.1 5.6 4.5 8 4.5z"/><circle cx="8" cy="8" r="2.6" fill="#e0e0e0"/></svg>
<svg class="a" style="left:44px;top:175px;" width="16" height="16" viewBox="0 0 16 16"><rect x="5" y="1" width="10" height="10" rx="2" fill="#6376b8"/><rect x="3" y="3" width="10" height="10" rx="2" fill="#7a8fd6"/><rect x="1" y="4.5" width="11" height="11" rx="2" fill="#8da5f3"/><rect x="2.8" y="8" width="1.6" height="2.5" fill="#2a3048"/><rect x="8.6" y="8" width="1.6" height="2.5" fill="#2a3048"/><path d="M4 12h5l-0.8 1.6h-3.4z" fill="#2a3048"/></svg>
<svg class="a" style="left:250px;top:175px;" width="16" height="16" viewBox="0 0 16 16"><path fill-rule="evenodd" fill="#e0e0e0" d="M8 2.2C4.2 2.2 1.4 5 0.6 8c.8 3 3.6 5.8 7.4 5.8s6.6-2.8 7.4-5.8C14.6 5 11.8 2.2 8 2.2zM8 4.5c2.4 0 4.3 1.6 4.9 3.5-.6 1.9-2.5 3.5-4.9 3.5S3.7 9.9 3.1 8C3.7 6.1 5.6 4.5 8 4.5z"/><circle cx="8" cy="8" r="2.6" fill="#e0e0e0"/></svg>
<svg class="a" style="left:44px;top:203px;" width="16" height="16" viewBox="0 0 16 16"><rect x="2" y="2" width="12" height="12" fill="none" stroke="#8da5f3" stroke-width="2"/></svg>
<svg class="a" style="left:250px;top:203px;" width="16" height="16" viewBox="0 0 16 16"><path fill-rule="evenodd" fill="#e0e0e0" d="M8 2.2C4.2 2.2 1.4 5 0.6 8c.8 3 3.6 5.8 7.4 5.8s6.6-2.8 7.4-5.8C14.6 5 11.8 2.2 8 2.2zM8 4.5c2.4 0 4.3 1.6 4.9 3.5-.6 1.9-2.5 3.5-4.9 3.5S3.7 9.9 3.1 8C3.7 6.1 5.6 4.5 8 4.5z"/><circle cx="8" cy="8" r="2.6" fill="#e0e0e0"/></svg>
<div class="a" style="left:20px;top:169px;width:2px;height:16px;background:#9a9a9a;"></div>
<div class="a" style="left:20px;top:183px;width:20px;height:2px;background:#9a9a9a;"></div>
<div class="a" style="left:21px;top:186px;width:1px;height:25px;background:#41464d;"></div>
<div class="a" style="left:21px;top:210px;width:19px;height:1px;background:#41464d;"></div>
<svg class="a" style="left:297px;top:76px;" width="16" height="16" viewBox="0 0 16 16"><path fill="#8da5f3" d="M1 1h4v2H3v2H1zM11 1h4v4h-2V3h-2zM1 11h2v2h2v2H1zM13 11h2v4h-4v-2h2z"/><path fill="#8da5f3" fill-rule="evenodd" d="M4 4h8v8H4zM6 6v4h4V6z"/></svg>
<svg class="a" style="left:445px;top:76px;" width="16" height="16" viewBox="0 0 16 16"><path d="M3 3l10 10M13 3L3 13" stroke="#e0e0e0" stroke-width="2.2"/></svg>
<svg class="a" style="left:552px;top:76px;" width="16" height="16" viewBox="0 0 16 16"><path d="M7 1h2v6h6v2H9v6H7V9H1V7h6z" fill="#8a8e94"/></svg>
<svg class="a" style="left:1612px;top:76px;" width="16" height="16" viewBox="0 0 16 16"><path d="M1 1h5L4.3 2.7 6.5 5 5 6.5 2.7 4.3 1 6zM15 1v5l-1.7-1.7L11 6.5 9.5 5l2.3-2.3L10 1zM1 15v-5l1.7 1.7L5 9.5 6.5 11l-2.3 2.3L6 15zM15 15h-5l1.7-1.7L9.5 11 11 9.5l2.3 2.3L15 10z" fill="#e0e0e0"/></svg>
<div class="a" style="left:290px;top:102px;width:28px;height:30px;background:#21262e;border-radius:3px"></div>
<div class="a" style="left:602px;top:102px;width:28px;height:30px;background:#21262e;border-radius:3px"></div>
<div class="a" style="left:323px;top:103px;width:1px;height:28px;background:#474d59;"></div>
<div class="a" style="left:427px;top:103px;width:1px;height:28px;background:#474d59;"></div>
<div class="a" style="left:563px;top:103px;width:1px;height:28px;background:#474d59;"></div>
<div class="a" style="left:667px;top:103px;width:1px;height:28px;background:#474d59;"></div>
<div class="a" style="left:739px;top:103px;width:1px;height:28px;background:#474d59;"></div>
<div class="a" style="left:779px;top:103px;width:1px;height:28px;background:#474d59;"></div>
<div class="a" style="left:819px;top:103px;width:1px;height:28px;background:#474d59;"></div>
<div class="a" style="left:870px;top:103px;width:1px;height:28px;background:#474d59;"></div>
<svg class="a" style="left:296px;top:109px;" width="16" height="16" viewBox="0 0 16 16"><path d="M2.5 2.5l4 11 2-4.2 4.3 4.3 1.4-1.4-4.3-4.3 4.2-2z" fill="#70bafa"/></svg>
<svg class="a" style="left:336px;top:109px;" width="16" height="16" viewBox="0 0 16 16"><circle cx="8" cy="8" r="2" fill="#e0e0e0"/><path d="M8 1l2.8 3H5.2zM8 15l2.8-3H5.2zM1 8l3-2.8v5.6zM15 8l-3-2.8v5.6z" fill="#e0e0e0"/></svg>
<svg class="a" style="left:368px;top:109px;" width="16" height="16" viewBox="0 0 16 16"><path d="M3.2 11.5A6 6 0 1 1 9.5 13.8" fill="none" stroke="#e0e0e0" stroke-width="2"/><path d="M1.5 8.5h5v5z" fill="#e0e0e0"/><circle cx="8.2" cy="7.6" r="1.9" fill="#e0e0e0"/></svg>
<svg class="a" style="left:400px;top:109px;" width="16" height="16" viewBox="0 0 16 16"><path d="M9 1h6v6l-2-2-2.5 2.5-1.5-1.5L11.5 3zM7 15H1V9l2 2 2.5-2.5 1.5 1.5L4.5 13z" fill="#e0e0e0"/><circle cx="8" cy="8" r="1.9" fill="#e0e0e0"/></svg>
<svg class="a" style="left:440px;top:109px;" width="16" height="16" viewBox="0 0 16 16"><path d="M1 1h11v2H3v3h7v2H3v5h5v2H1z" fill="#e0e0e0"/><path d="M9 8l6 2.2-2.5 1 2.5 2.5-1 1-2.5-2.5-1 2.5z" fill="#e0e0e0"/></svg>
<svg class="a" style="left:472px;top:109px;" width="16" height="16" viewBox="0 0 16 16"><path d="M7 0h2v3H7zM0 7h3v2H0zM7 11h2v4H7z" fill="#e0e0e0"/><path d="M8.5 8.5l6 2.2-2.5 1 2.5 2.5-1 1-2.5-2.5-1 2.5z" fill="#e0e0e0"/></svg>
<svg class="a" style="left:504px;top:109px;" width="16" height="16" viewBox="0 0 16 16"><path d="M5 15c-1.5-.5-4-4.5-4-5.5 0-.8.8-1.3 1.5-1l1.5 1.5V3c0-.7.5-1.2 1.1-1.2s1.1.5 1.1 1.2v4h.3V1.5c0-.7.5-1.2 1.1-1.2s1.1.5 1.1 1.2V7h.3V2.5c0-.7.5-1.2 1.1-1.2s1.1.5 1.1 1.2V7.5h.3V4c0-.7.5-1.2 1.1-1.2S15 3.3 15 4v7c0 2.2-1.8 4-4 4z" fill="#e0e0e0"/></svg>
<svg class="a" style="left:536px;top:109px;" width="16" height="16" viewBox="0 0 16 16"><path fill-rule="evenodd" d="M2 1l13 14H2zM5 8v4h3.6z" fill="#e0e0e0"/></svg>
<svg class="a" style="left:577px;top:109px;" width="16" height="16" viewBox="0 0 16 16"><path d="M1 4h2v2H1zM1 8h2v2H1zM5 2h2v2H5zM9 2h2v2H9z" fill="#e0e0e0"/><path d="M5 15V11a3.5 3.5 0 0 1 7 0v4h-2.2v-4a1.3 1.3 0 0 0-2.6 0v4z" fill="#e0e0e0"/></svg>
<svg class="a" style="left:608px;top:109px;" width="16" height="16" viewBox="0 0 16 16"><path d="M4 1v14M1 4h14M1 12h5M9 1v5M1 8h6" stroke="#70bafa" stroke-width="1.5" fill="none"/><path d="M7 15V11a3.5 3.5 0 0 1 7 0v4h-2v-4a1.5 1.5 0 0 0-3 0v4z" fill="#70bafa"/></svg>
<svg class="a" style="left:640px;top:109px;" width="16" height="16" viewBox="0 0 16 16"><circle cx="8" cy="2.5" r="1.9" fill="#e0e0e0"/><circle cx="8" cy="8" r="1.9" fill="#e0e0e0"/><circle cx="8" cy="13.5" r="1.9" fill="#e0e0e0"/></svg>
<svg class="a" style="left:680px;top:109px;" width="16" height="16" viewBox="0 0 16 16"><path d="M4 7V5a4 4 0 0 1 8 0v2h1v8H3V7zM6 7h4V5a2 2 0 0 0-4 0z M7 10v3h2v-3z" fill="#e0e0e0" fill-rule="evenodd"/></svg>
<svg class="a" style="left:712px;top:109px;" width="16" height="16" viewBox="0 0 16 16"><path d="M1 1h2v2H1zM13 1h2v2h-2zM1 13h2v2H1zM13 13h2v2h-2z" fill="#fff"/><path d="M7 2h6v1h-4v4h5v-4h1v6H9v6H3V9h4z" fill="#808080"/><rect x="3" y="7" width="6" height="6" fill="#808080"/></svg>
<svg class="a" style="left:752px;top:109px;" width="16" height="16" viewBox="0 0 16 16"><g transform="rotate(-45 8 8)"><rect x="3.5" y="6" width="9" height="4" fill="#e0e0e0"/><circle cx="3" cy="5.8" r="2.4" fill="#e0e0e0"/><circle cx="3" cy="10.2" r="2.4" fill="#e0e0e0"/><circle cx="13" cy="5.8" r="2.4" fill="#e0e0e0"/><circle cx="13" cy="10.2" r="2.4" fill="#e0e0e0"/></g></svg>
<svg class="a" style="left:791px;top:109px;" width="16" height="16" viewBox="0 0 16 16"><circle cx="5" cy="6" r="3.5" fill="#5b6b99"/><circle cx="10" cy="5.5" r="2.8" fill="#5b6b99"/><rect x="3" y="7" width="9" height="6" rx="1" fill="#5b6b99"/><path d="M12 9l3-2v6l-3-2z" fill="#5b6b99"/></svg>
<svg class="a" style="left:312px;top:161px;" width="16" height="16" viewBox="0 0 16 16"><rect x="6.5" y="6.5" width="3" height="3" fill="#e0e0e0"/><path d="M1.5 5.5L4 8l-2.5 2.5M14.5 5.5L12 8l2.5 2.5M5.5 1.5L8 4l2.5-2.5M5.5 14.5L8 12l2.5 2.5" fill="none" stroke="#e0e0e0" stroke-width="1.4"/></svg>
<svg class="a" style="left:344px;top:161px;" width="16" height="16" viewBox="0 0 16 16"><circle cx="8" cy="8" r="7" fill="#e0e0e0"/><rect x="4" y="7" width="8" height="2" fill="#333"/></svg>
<svg class="a" style="left:428px;top:161px;" width="16" height="16" viewBox="0 0 16 16"><circle cx="8" cy="8" r="7" fill="#e0e0e0"/><path d="M7 4h2v3h3v2H9v3H7V9H4V7h3z" fill="#333"/></svg>
<svg class="a" style="left:2px;top:3px;" width="16" height="16" viewBox="0 0 16 16"><path d="M2 5l2-3 2 1.5 2-1 2 1 2-1.5 2 3v7c-2 1.5-4 2-6 2s-4-.5-6-2z" fill="#478cbf"/><circle cx="5.5" cy="8.5" r="1.7" fill="#fff"/><circle cx="10.5" cy="8.5" r="1.7" fill="#fff"/><circle cx="5.7" cy="8.7" r="0.8" fill="#333"/><circle cx="10.3" cy="8.7" r="0.8" fill="#333"/><path d="M5 12h6" stroke="#fff" stroke-width="1.2"/></svg>
<svg class="a" style="left:262px;top:561px;" width="16" height="16" viewBox="0 0 16 16"><circle cx="8" cy="2.5" r="1.9" fill="#8a8e94"/><circle cx="8" cy="8" r="1.9" fill="#8a8e94"/><circle cx="8" cy="13.5" r="1.9" fill="#8a8e94"/></svg>
<svg class="a" style="left:14px;top:595px;" width="16" height="16" viewBox="0 0 16 16"><path d="M10 2L5 8l5 6" fill="none" stroke="#e0e0e0" stroke-width="1.8"/></svg>
<svg class="a" style="left:34px;top:595px;" width="16" height="16" viewBox="0 0 16 16"><path d="M6 2l5 6-5 6" fill="none" stroke="#8a8e94" stroke-width="1.8"/></svg>
<div class="a" style="left:252px;top:595px;width:16px;height:16px;background:#e0e0e0;"></div>
<svg class="a" style="left:224px;top:628px;" width="16" height="16" viewBox="0 0 16 16"><circle cx="6.5" cy="6.5" r="4.3" fill="none" stroke="#e0e0e0" stroke-width="2"/><path d="M9.5 9.5L14.5 14.5" stroke="#e0e0e0" stroke-width="2.2" stroke-linecap="round"/></svg>
<svg class="a" style="left:252px;top:628px;" width="16" height="16" viewBox="0 0 16 16"><path d="M4 1l3 3.5H5v7h2l-3 3.5-3-3.5h2v-7H1z" fill="#e0e0e0"/><path d="M9 2h6v2H9zM9 7h4v2H9zM9 12h2v2H9z" fill="#e0e0e0"/></svg>
<svg class="a" style="left:32px;top:665px;" width="16" height="16" viewBox="0 0 16 16"><path d="M8 1l2.1 4.6 5 .6-3.7 3.4 1 4.9L8 12l-4.4 2.5 1-4.9L.9 6.2l5-.6z" fill="#e0e0e0"/></svg>
<svg class="a" style="left:14px;top:693px;" width="16" height="16" viewBox="0 0 16 16"><path d="M3 6l5 4.5 5-4.5" fill="none" stroke="#8a8e94" stroke-width="1.7"/></svg>
<svg class="a" style="left:32px;top:693px;" width="16" height="16" viewBox="0 0 16 16"><path d="M1 3.5c0-.6.4-1 1-1h4l1.5 1.5H14c.6 0 1 .4 1 1V13c0 .6-.4 1-1 1H2c-.6 0-1-.4-1-1z" fill="#80b3de"/></svg>
<div class="a" style="left:20px;top:715px;width:2px;height:15px;background:#9a9a9a;"></div>
<div class="a" style="left:20px;top:728px;width:8px;height:2px;background:#9a9a9a;"></div>
<svg class="a" style="left:26px;top:721px;" width="16" height="16" viewBox="0 0 16 16"><path d="M6 3l4.5 5L6 13" fill="none" stroke="#8a8e94" stroke-width="1.7"/></svg>
<svg class="a" style="left:44px;top:721px;" width="16" height="16" viewBox="0 0 16 16"><path d="M1 3.5c0-.6.4-1 1-1h4l1.5 1.5H14c.6 0 1 .4 1 1V13c0 .6-.4 1-1 1H2c-.6 0-1-.4-1-1z" fill="#80b3de"/></svg>
<div class="a" style="left:21px;top:744px;width:1px;height:13px;background:#41464d;"></div>
<div class="a" style="left:21px;top:756px;width:19px;height:1px;background:#41464d;"></div>
<svg class="a" style="left:45px;top:750px;" width="15" height="15" viewBox="0 0 16 16"><rect x="0" y="0" width="16" height="16" rx="1.5" fill="#2d3346"/><path d="M2 5.5l1.3-2.2 1.6.9 1.5-1.3 1.6.8 1.6-.8 1.5 1.3 1.6-.9L14 5.5v6.2c-1.8 1.3-3.8 1.8-6 1.8s-4.2-.5-6-1.8z" fill="#4a90c8"/><circle cx="5.4" cy="8.3" r="1.6" fill="#fff"/><circle cx="10.6" cy="8.3" r="1.6" fill="#fff"/><circle cx="5.6" cy="8.5" r="0.8" fill="#333"/><circle cx="10.4" cy="8.5" r="0.8" fill="#333"/><path d="M4.5 11.3h7" stroke="#fff" stroke-width="1" stroke-dasharray="1 0.8"/></svg>
<svg class="a" style="left:296px;top:730px;" width="16" height="16" viewBox="0 0 16 16"><path d="M2 1h6.5v4.5H13V9h-3.5v6H2z" fill="#e0e0e0"/><path d="M9.8 1.2l3 3h-3z" fill="#e0e0e0"/><path d="M11 9h2v2h2v2h-2v2h-2v-2H9v-2h2z" fill="#5fff97"/></svg>
<svg class="a" style="left:328px;top:730px;" width="16" height="16" viewBox="0 0 16 16"><path d="M5 1h6v2h4v2H1V3h4z" fill="#e0e0e0"/><path fill-rule="evenodd" d="M2 6h12v8c0 .6-.4 1-1 1H3c-.6 0-1-.4-1-1zM4 7.5v6h1.5v-6zM7.25 7.5v6h1.5v-6zM10.5 7.5v6H12v-6z" fill="#e0e0e0"/></svg>
<svg class="a" style="left:368px;top:730px;" width="16" height="16" viewBox="0 0 16 16"><path fill-rule="evenodd" d="M1 2.5h9.5l4.5 5.5-4.5 5.5H1zM2.8 4.3v7.4h6.9l3-3.7-3-3.7z" fill="#e0e0e0"/><path fill-rule="evenodd" d="M3.6 11l2.2-6.4h1.6L9.6 11H8.2l-.45-1.4H5.45L5 11zM5.8 8.5h1.6L6.6 6z" fill="#e0e0e0"/><path d="M10 6.6l1.4 1.4-1.4 1.4z" fill="#e0e0e0"/></svg>
<div class="a" style="left:355px;top:724px;width:1px;height:29px;background:#474d59;"></div>
<div class="a" style="left:395px;top:724px;width:1px;height:29px;background:#474d59;"></div>
<div class="a" style="left:402px;top:724px;width:28px;height:28px;background:#21262e;border-radius:3px"></div>
<svg class="a" style="left:408px;top:730px;" width="16" height="16" viewBox="0 0 16 16"><path d="M2.2 9.2A5.8 5.8 0 0 1 11 3.6" fill="none" stroke="#70bafa" stroke-width="2"/><path d="M9.6 0.8L14.2 4l-4.4 2.6z" fill="#70bafa"/><path d="M13.8 6.8A5.8 5.8 0 0 1 5 12.4" fill="none" stroke="#70bafa" stroke-width="2"/><path d="M6.4 15.2L1.8 12l4.4-2.6z" fill="#70bafa"/></svg>
<svg class="a" style="left:496px;top:730px;" width="16" height="16" viewBox="0 0 16 16"><path d="M4 6l4-4 4 4M4 10l4 4 4-4" fill="none" stroke="#e0e0e0" stroke-width="1.6"/></svg>
<svg class="a" style="left:490px;top:763px;" width="16" height="16" viewBox="0 0 16 16"><circle cx="6.5" cy="6.5" r="4.3" fill="none" stroke="#e0e0e0" stroke-width="2"/><path d="M9.5 9.5L14.5 14.5" stroke="#e0e0e0" stroke-width="2.2" stroke-linecap="round"/></svg>
<svg class="a" style="left:526px;top:730px;" width="16" height="16" viewBox="0 0 16 16"><path d="M11 3v10L4 8z" fill="#e0e0e0"/></svg>
<svg class="a" style="left:558px;top:730px;" width="16" height="16" viewBox="0 0 16 16"><path d="M9 3v10L2 8z" fill="#e0e0e0"/><rect x="10.5" y="3" width="2.5" height="10" fill="#e0e0e0"/></svg>
<svg class="a" style="left:590px;top:730px;" width="16" height="16" viewBox="0 0 16 16"><rect x="4" y="3" width="3" height="10" fill="#e0e0e0"/><rect x="9" y="3" width="3" height="10" fill="#e0e0e0"/></svg>
<svg class="a" style="left:622px;top:730px;" width="16" height="16" viewBox="0 0 16 16"><rect x="3" y="3" width="2.5" height="10" fill="#e0e0e0"/><path d="M7 3v10l7-5z" fill="#e0e0e0"/></svg>
<svg class="a" style="left:654px;top:730px;" width="16" height="16" viewBox="0 0 16 16"><path d="M5 3v10l7-5z" fill="#e0e0e0"/></svg>
<svg class="a" style="left:694px;top:730px;" width="16" height="16" viewBox="0 0 16 16"><path d="M1 3h5l1.5 1.5H13V7H4L1.5 14H1z" fill="#e0e0e0"/><path d="M4.5 8H15l-2.5 6H2z" fill="#e0e0e0"/></svg>
<svg class="a" style="left:726px;top:730px;" width="16" height="16" viewBox="0 0 16 16"><path fill-rule="evenodd" d="M1 1h14v14H1zM3 3v2.5h2.5V3zM6.75 3v2.5h2.5V3zM10.5 3v2.5H13V3zM3 6.75v2.5h2.5v-2.5zM6.75 6.75v2.5h2.5v-2.5zM10.5 6.75v2.5H13v-2.5zM3 10.5V13h2.5v-2.5zM6.75 10.5V13h2.5v-2.5zM10.5 10.5V13H13v-2.5z" fill="#e0e0e0"/></svg>
<svg class="a" style="left:765px;top:730px;" width="16" height="16" viewBox="0 0 16 16"><path d="M1 1h10v2H3v8H1z" fill="#e0e0e0"/><path fill-rule="evenodd" d="M5 5h10v10H5zM7 7v6h6V7z" fill="#e0e0e0"/></svg>
<svg class="a" style="left:798px;top:730px;" width="16" height="16" viewBox="0 0 16 16"><path fill-rule="evenodd" d="M5 2V1h6v1h3v13H2V2zM4 4v9h8V4h-1v1.5H5V4z" fill="#e0e0e0"/></svg>
<svg class="a" style="left:838px;top:730px;" width="16" height="16" viewBox="0 0 16 16"><path d="M1 4l3-3v2h3v2H4v2z" fill="#e0e0e0"/><circle cx="11" cy="4" r="3" fill="#e0e0e0"/><path d="M10 8h2v3h3v2h-3v3h-2v-3H7v-2h3z" fill="#5fff97"/></svg>
<svg class="a" style="left:870px;top:730px;" width="16" height="16" viewBox="0 0 16 16"><circle cx="4" cy="4" r="3" fill="#e0e0e0"/><path d="M15 4l-3-3v2H9v2h3v2z" fill="#e0e0e0"/><path d="M10 8h2v3h3v2h-3v3h-2v-3H7v-2h3z" fill="#5fff97"/></svg>
<svg class="a" style="left:910px;top:730px;" width="16" height="16" viewBox="0 0 16 16"><path d="M7 3L2 8l5 5M2.5 8H11" fill="none" stroke="#e0e0e0" stroke-width="2"/><rect x="13" y="6.5" width="2" height="3" fill="#e0e0e0"/></svg>
<svg class="a" style="left:942px;top:730px;" width="16" height="16" viewBox="0 0 16 16"><path d="M9 3l5 5-5 5M13.5 8H5" fill="none" stroke="#e0e0e0" stroke-width="2"/><rect x="1" y="6.5" width="2" height="3" fill="#e0e0e0"/></svg>
<svg class="a" style="left:974px;top:730px;" width="16" height="16" viewBox="0 0 16 16"><path d="M5 1h6v2h4v2H1V3h4z" fill="#e0e0e0"/><path fill-rule="evenodd" d="M2 6h12v8c0 .6-.4 1-1 1H3c-.6 0-1-.4-1-1zM4 7.5v6h1.5v-6zM7.25 7.5v6h1.5v-6zM10.5 7.5v6H12v-6z" fill="#e0e0e0"/></svg>
<div class="a" style="left:681px;top:724px;width:1px;height:29px;background:#474d59;"></div>
<div class="a" style="left:753px;top:724px;width:1px;height:29px;background:#474d59;"></div>
<div class="a" style="left:825px;top:724px;width:1px;height:29px;background:#474d59;"></div>
<div class="a" style="left:897px;top:724px;width:1px;height:29px;background:#474d59;"></div>
<div class="a" style="left:1002px;top:724px;width:1px;height:29px;background:#474d59;"></div>
<svg class="a" style="left:1226px;top:730px;" width="16" height="16" viewBox="0 0 16 16"><path d="M4 6l4-4 4 4M4 10l4 4 4-4" fill="none" stroke="#8a8e94" stroke-width="1.6"/></svg>
<svg class="a" style="left:1544px;top:730px;" width="16" height="16" viewBox="0 0 16 16"><circle cx="8" cy="8" r="7" fill="#e0e0e0"/><rect x="4" y="7" width="8" height="2" fill="#333"/></svg>
<svg class="a" style="left:1576px;top:730px;" width="16" height="16" viewBox="0 0 16 16"><circle cx="8" cy="8" r="7" fill="#e0e0e0"/><path d="M7 4h2v8H7V6.5L5.8 7V5.2z" fill="#333"/></svg>
<svg class="a" style="left:1608px;top:730px;" width="16" height="16" viewBox="0 0 16 16"><circle cx="8" cy="8" r="7" fill="#e0e0e0"/><path d="M7 4h2v3h3v2H9v3H7V9H4V7h3z" fill="#333"/></svg>
<div class="a" style="left:296px;top:1009px;width:8px;height:8px;border-radius:4px;background:#f2685a"></div>
<svg class="a" style="left:1493px;top:1004px;" width="16" height="16" viewBox="0 0 16 16"><path d="M8 1c3 0 5 2 5 5v4l2 3H1l2-3V6c0-3 2-5 5-5z" fill="#5a5f66" transform="rotate(25 8 8)"/></svg>
<svg class="a" style="left:1608px;top:1005px;" width="16" height="16" viewBox="0 0 16 16"><path d="M1 1h14v2H1z" fill="#e0e0e0"/><path d="M4 4l3 3.5H5V15H3V7.5H1zM12 4l3 3.5h-2V15h-2V7.5H9z" fill="#e0e0e0"/></svg>
<svg class="a" style="left:1895px;top:76px;" width="16" height="16" viewBox="0 0 16 16"><circle cx="8" cy="2.5" r="1.9" fill="#8a8e94"/><circle cx="8" cy="8" r="1.9" fill="#8a8e94"/><circle cx="8" cy="13.5" r="1.9" fill="#8a8e94"/></svg>
<svg class="a" style="left:1652px;top:109px;" width="16" height="16" viewBox="0 0 16 16"><path d="M2 1h6.5v4.5H13V9h-3.5v6H2z" fill="#e0e0e0"/><path d="M9.8 1.2l3 3h-3z" fill="#e0e0e0"/><path d="M11 9h2v2h2v2h-2v2h-2v-2H9v-2h2z" fill="#5fff97"/></svg>
<svg class="a" style="left:1684px;top:109px;" width="16" height="16" viewBox="0 0 16 16"><path d="M1 3h5l1.5 1.5H13V7H4L1.5 14H1z" fill="#e0e0e0"/><path d="M4.5 8H15l-2.5 6H2z" fill="#e0e0e0"/></svg>
<svg class="a" style="left:1716px;top:109px;" width="16" height="16" viewBox="0 0 16 16"><path fill-rule="evenodd" d="M2 1h10l3 3v10c0 .6-.4 1-1 1H2c-.6 0-1-.4-1-1V2c0-.6.4-1 1-1zM4 2v4h7V2zM8 9.5a2 2 0 1 0 0 .1z" fill="#6e7178"/></svg>
<svg class="a" style="left:1748px;top:109px;" width="16" height="16" viewBox="0 0 16 16"><circle cx="8" cy="2.5" r="1.9" fill="#e0e0e0"/><circle cx="8" cy="8" r="1.9" fill="#e0e0e0"/><circle cx="8" cy="13.5" r="1.9" fill="#e0e0e0"/></svg>
<svg class="a" style="left:1834px;top:109px;" width="16" height="16" viewBox="0 0 16 16"><path d="M10 2L5 8l5 6" fill="none" stroke="#e0e0e0" stroke-width="1.8"/></svg>
<svg class="a" style="left:1858px;top:109px;" width="16" height="16" viewBox="0 0 16 16"><path d="M6 2l5 6-5 6" fill="none" stroke="#8a8e94" stroke-width="1.8"/></svg>
<svg class="a" style="left:1886px;top:109px;" width="16" height="16" viewBox="0 0 16 16"><path d="M4.5 4.5A5 5 0 1 1 3.5 10" fill="none" stroke="#e0e0e0" stroke-width="2"/><path d="M1 3v5h5z" fill="#e0e0e0"/><path d="M8 5v3.5h3" fill="none" stroke="#e0e0e0" stroke-width="1.8"/></svg>
<svg class="a" style="left:1651px;top:141px;" width="16" height="16" viewBox="0 0 16 16"><rect x="5" y="1" width="10" height="10" rx="2" fill="#6376b8"/><rect x="3" y="3" width="10" height="10" rx="2" fill="#7a8fd6"/><rect x="1" y="4.5" width="11" height="11" rx="2" fill="#8da5f3"/><rect x="2.8" y="8" width="1.6" height="2.5" fill="#2a3048"/><rect x="8.6" y="8" width="1.6" height="2.5" fill="#2a3048"/><path d="M4 12h5l-0.8 1.6h-3.4z" fill="#2a3048"/></svg>
<svg class="a" style="left:1856px;top:141px;" width="16" height="16" viewBox="0 0 16 16"><path d="M3 5.5l5 5 5-5" fill="none" stroke="#e0e0e0" stroke-width="2"/></svg>
<svg class="a" style="left:1886px;top:141px;" width="16" height="16" viewBox="0 0 16 16"><circle cx="9.5" cy="4.5" r="3" fill="none" stroke="#e0e0e0" stroke-width="2"/><path d="M7.3 6.7L4.5 9.5" stroke="#e0e0e0" stroke-width="2"/><text x="0.2" y="15.8" font-size="7" font-weight="700" fill="#e0e0e0" font-family="Liberation Sans" textLength="15.6" lengthAdjust="spacingAndGlyphs">DOC</text></svg>
<svg class="a" style="left:1854px;top:174px;" width="16" height="16" viewBox="0 0 16 16"><circle cx="6.5" cy="6.5" r="4.3" fill="none" stroke="#e0e0e0" stroke-width="2"/><path d="M9.5 9.5L14.5 14.5" stroke="#e0e0e0" stroke-width="2.2" stroke-linecap="round"/></svg>
<svg class="a" style="left:1886px;top:174px;" width="16" height="16" viewBox="0 0 16 16"><path d="M3 1h2v6h1v6a2 2 0 0 1-4 0V7h1z" fill="#e0e0e0"/><path d="M9 1h1.5v3.5h2V1H14v4l-2 2v8h-1.5V7L9 5z" fill="#e0e0e0"/></svg>
<div class="a" style="left:1650px;top:205px;width:254px;height:24px;background:#40444d;border-radius:2px"></div>
<svg class="a" style="left:1702px;top:209px;" width="16" height="16" viewBox="0 0 16 16"><rect x="5" y="1" width="10" height="10" rx="2" fill="#6376b8"/><rect x="3" y="3" width="10" height="10" rx="2" fill="#7a8fd6"/><rect x="1" y="4.5" width="11" height="11" rx="2" fill="#8da5f3"/><rect x="2.8" y="8" width="1.6" height="2.5" fill="#2a3048"/><rect x="8.6" y="8" width="1.6" height="2.5" fill="#2a3048"/><path d="M4 12h5l-0.8 1.6h-3.4z" fill="#2a3048"/></svg>
<div class="t" style="left:1723px;top:208.30px;font-size:15px;color:#dcdddf;font-weight:700;letter-spacing:-0.108px;">AnimatedSprite2D</div>
<div class="a" style="left:1650px;top:229px;width:254px;height:24px;background:#272c35;"></div>
<svg class="a" style="left:1651px;top:234px;" width="14" height="14" viewBox="0 0 16 16"><path d="M3.5 6.5l4.5 4 4.5-4" fill="none" stroke="#a4a7ab" stroke-width="1.8"/></svg>
<div class="t" style="left:1664px;top:232.30px;font-size:15px;color:#dcdddf;font-weight:700;letter-spacing:-0.060px;">Animation</div>
<div class="t" style="left:1670px;top:259.30px;font-size:15px;color:#b9bbbe;letter-spacing:-0.308px;">Sprite Frames</div>
<svg class="a" style="left:1764px;top:260px;" width="16" height="16" viewBox="0 0 16 16"><path d="M4 5.5A5 5 0 1 1 4.2 11.5" fill="none" stroke="#e0e0e0" stroke-width="1.9"/><path d="M1 3.5v5h5z" fill="#e0e0e0"/></svg>
<svg class="a" style="left:1789px;top:260px;" width="16" height="16" viewBox="0 0 16 16"><path d="M1 1h9v10H1z" fill="#e0e0e0"/><rect x="2.5" y="4.5" width="2" height="2.5" fill="#222"/><rect x="6.5" y="4.5" width="2" height="2.5" fill="#222"/><path d="M12 1h2v2h-2zM12 5h2v2h-2zM12 9h2v2h-2zM12 13h2v2h-2zM1 13h2v2H1zM5 13h2v2H5zM8.5 13h2v2h-2z" fill="#e0e0e0"/><path d="M3 8.5h5v1.2H3z" fill="#222"/></svg>
<div class="t" style="left:1809px;top:259.30px;font-size:15px;color:#dcdddf;letter-spacing:-0.354px;">SpriteFra</div>
<svg class="a" style="left:1883px;top:264px;" width="16" height="16" viewBox="0 0 16 16"><path d="M4.5 6.5l3.5 3.5 3.5-3.5" fill="none" stroke="#e0e0e0" stroke-width="1.8"/></svg>
<div class="t" style="left:1670px;top:293.30px;font-size:15px;color:#b9bbbe;letter-spacing:0.100px;">Animation</div>
<svg class="a" style="left:1764px;top:294px;" width="16" height="16" viewBox="0 0 16 16"><path d="M4 5.5A5 5 0 1 1 4.2 11.5" fill="none" stroke="#e0e0e0" stroke-width="1.9"/><path d="M1 3.5v5h5z" fill="#e0e0e0"/></svg>
<div class="a" style="left:1783px;top:287px;width:121px;height:29px;background:#1e2228;border-radius:2px"></div>
<div class="t" style="left:1789px;top:293.30px;font-size:15px;color:#dcdddf;letter-spacing:-0.247px;">walk_down</div>
<svg class="a" style="left:1886px;top:294px;" width="16" height="16" viewBox="0 0 16 16"><path d="M3 5.5l5 5 5-5" fill="none" stroke="#e0e0e0" stroke-width="2"/></svg>
<div class="t" style="left:1670px;top:326.30px;font-size:15px;color:#85888d;letter-spacing:-0.469px;">Frame</div>
<div class="a" style="left:1783px;top:321px;width:121px;height:29px;background:#1e2228;border-radius:2px"></div>
<div class="t" style="left:1800px;top:326.30px;font-size:15px;color:#dcdddf;">1</div>
<svg class="a" style="left:1882px;top:327px;" width="16" height="16" viewBox="0 0 16 16"><path d="M4 6l4-4 4 4M4 10l4 4 4-4" fill="none" stroke="#e0e0e0" stroke-width="1.6"/></svg>
<div class="t" style="left:1670px;top:359.30px;font-size:15px;color:#b9bbbe;letter-spacing:-0.698px;">Speed Scale</div>
<div class="a" style="left:1783px;top:355px;width:121px;height:27px;background:#1e2228;border-radius:2px"></div>
<div class="t" style="left:1800px;top:358.30px;font-size:15px;color:#dcdddf;">1</div>
<div class="a" style="left:1650px;top:382px;width:254px;height:24px;background:#272c35;"></div>
<svg class="a" style="left:1650px;top:388px;" width="14" height="14" viewBox="0 0 16 16"><path d="M6.5 3.5l4 4.5-4 4.5" fill="none" stroke="#a4a7ab" stroke-width="1.8"/></svg>
<div class="t" style="left:1664px;top:385.30px;font-size:15px;color:#dcdddf;font-weight:700;letter-spacing:-0.091px;">Offset</div>
<div class="a" style="left:1650px;top:407px;width:254px;height:24px;background:#40444d;border-radius:2px"></div>
<svg class="a" style="left:1738px;top:411px;" width="16" height="16" viewBox="0 0 16 16"><circle cx="8" cy="8" r="5.2" fill="none" stroke="#8da5f3" stroke-width="2"/></svg>
<div class="t" style="left:1760px;top:410.30px;font-size:15px;color:#dcdddf;font-weight:700;letter-spacing:-0.365px;">Node2D</div>
<div class="a" style="left:1650px;top:431px;width:254px;height:24px;background:#272c35;"></div>
<svg class="a" style="left:1651px;top:436px;" width="14" height="14" viewBox="0 0 16 16"><path d="M3.5 6.5l4.5 4 4.5-4" fill="none" stroke="#a4a7ab" stroke-width="1.8"/></svg>
<div class="t" style="left:1664px;top:434.30px;font-size:15px;color:#dcdddf;font-weight:700;letter-spacing:-0.207px;">Transform</div>
<div class="t" style="left:1670px;top:460.30px;font-size:15px;color:#b9bbbe;letter-spacing:-0.109px;">Position</div>
<div class="a" style="left:1783px;top:455px;width:121px;height:29px;background:#1e2228;border-radius:2px"></div>
<div class="a" style="left:1783px;top:455px;width:20px;height:29px;background:#191c21;border-radius:2px 0 0 2px"></div>
<div class="t" style="left:1788px;top:460.30px;font-size:15px;color:#c27c5e;">x</div>
<div class="t" style="left:1807px;top:460.30px;font-size:15px;color:#dcdddf;">0</div>
<div class="t" style="left:1822px;top:460.30px;font-size:15px;color:#6e7278;">px</div>
<div class="a" style="left:1783px;top:488px;width:121px;height:29px;background:#1e2228;border-radius:2px"></div>
<div class="a" style="left:1783px;top:488px;width:20px;height:29px;background:#191c21;border-radius:2px 0 0 2px"></div>
<div class="t" style="left:1788px;top:493.30px;font-size:15px;color:#6aa26a;">y</div>
<div class="t" style="left:1807px;top:493.30px;font-size:15px;color:#dcdddf;">0</div>
<div class="t" style="left:1822px;top:493.30px;font-size:15px;color:#6e7278;">px</div>
<div class="t" style="left:1670px;top:526.30px;font-size:15px;color:#b9bbbe;letter-spacing:-0.047px;">Rotation</div>
<div class="a" style="left:1783px;top:521px;width:121px;height:29px;background:#1e2228;border-radius:2px"></div>
<div class="t" style="left:1799px;top:526.30px;font-size:15px;color:#dcdddf;">0</div>
<div class="t" style="left:1810px;top:526.69px;font-size:11px;color:#8a8e94;">°</div>
<div class="a" style="left:1789px;top:544px;width:105px;height:2px;background:#6a6d72;"></div>
<div class="a" style="left:1841px;top:542px;width:4px;height:5px;background:#c8c8c8;"></div>
<div class="t" style="left:1670px;top:559.30px;font-size:15px;color:#b9bbbe;letter-spacing:-0.846px;">Scale</div>
<svg class="a" style="left:1764px;top:560px;" width="16" height="16" viewBox="0 0 16 16"><path d="M4 5.5A5 5 0 1 1 4.2 11.5" fill="none" stroke="#e0e0e0" stroke-width="1.9"/><path d="M1 3.5v5h5z" fill="#e0e0e0"/></svg>
<div class="a" style="left:1783px;top:554px;width:121px;height:29px;background:#1e2228;border-radius:2px"></div>
<div class="a" style="left:1783px;top:554px;width:20px;height:29px;background:#191c21;border-radius:2px 0 0 2px"></div>
<div class="t" style="left:1788px;top:559.30px;font-size:15px;color:#c27c5e;">x</div>
<div class="t" style="left:1807px;top:559.30px;font-size:15px;color:#dcdddf;">3</div>
<div class="a" style="left:1783px;top:587px;width:121px;height:29px;background:#1e2228;border-radius:2px"></div>
<div class="a" style="left:1783px;top:587px;width:20px;height:29px;background:#191c21;border-radius:2px 0 0 2px"></div>
<div class="t" style="left:1788px;top:592.30px;font-size:15px;color:#6aa26a;">y</div>
<div class="t" style="left:1807px;top:592.30px;font-size:15px;color:#dcdddf;">3</div>
<svg class="a" style="left:1887px;top:577px;" width="16" height="16" viewBox="0 0 16 16"><g transform="rotate(-45 8 8)" fill="none" stroke="#e0e0e0" stroke-width="1.9"><rect x="1" y="5" width="8" height="6" rx="3"/><rect x="7" y="5" width="8" height="6" rx="3"/></g></svg>
<div class="t" style="left:1670px;top:625.30px;font-size:15px;color:#b9bbbe;letter-spacing:-0.722px;">Skew</div>
<div class="a" style="left:1783px;top:620px;width:121px;height:28px;background:#1e2228;border-radius:2px"></div>
<div class="t" style="left:1799px;top:625.30px;font-size:15px;color:#dcdddf;">0</div>
<div class="t" style="left:1810px;top:625.69px;font-size:11px;color:#8a8e94;">°</div>
<div class="a" style="left:1789px;top:643px;width:105px;height:2px;background:#6a6d72;"></div>
<div class="a" style="left:1841px;top:641px;width:4px;height:5px;background:#c8c8c8;"></div>
<div class="a" style="left:1650px;top:649px;width:254px;height:24px;background:#40444d;border-radius:2px"></div>
<svg class="a" style="left:1724px;top:653px;" width="16" height="16" viewBox="0 0 16 16"><path d="M14 1.5l.5.5-6 7.5-2-2z" fill="#7c7e82"/><path d="M5.5 8.5l2 2c-.5 2.5-2.5 4-5.5 4 .2-3 1-5.5 3.5-6z" fill="#7c7e82"/></svg>
<div class="t" style="left:1746px;top:652.30px;font-size:15px;color:#dcdddf;font-weight:700;letter-spacing:-0.122px;">CanvasItem</div>
<div class="a" style="left:1650px;top:673px;width:254px;height:24px;background:#272c35;"></div>
<svg class="a" style="left:1650px;top:679px;" width="14" height="14" viewBox="0 0 16 16"><path d="M6.5 3.5l4 4.5-4 4.5" fill="none" stroke="#a4a7ab" stroke-width="1.8"/></svg>
<div class="t" style="left:1664px;top:676.30px;font-size:15px;color:#dcdddf;font-weight:700;letter-spacing:-0.192px;">Visibility</div>
<div class="a" style="left:1650px;top:697px;width:254px;height:24px;background:#272c35;"></div>
<svg class="a" style="left:1650px;top:703px;" width="14" height="14" viewBox="0 0 16 16"><path d="M6.5 3.5l4 4.5-4 4.5" fill="none" stroke="#a4a7ab" stroke-width="1.8"/></svg>
<div class="t" style="left:1664px;top:700.30px;font-size:15px;color:#dcdddf;font-weight:700;letter-spacing:-0.168px;">Ordering</div>
<div class="a" style="left:1650px;top:721px;width:254px;height:24px;background:#272c35;"></div>
<svg class="a" style="left:1650px;top:727px;" width="14" height="14" viewBox="0 0 16 16"><path d="M6.5 3.5l4 4.5-4 4.5" fill="none" stroke="#a4a7ab" stroke-width="1.8"/></svg>
<div class="t" style="left:1664px;top:724.30px;font-size:15px;color:#dcdddf;font-weight:700;letter-spacing:-0.154px;">Texture</div>
<div class="a" style="left:1650px;top:745px;width:254px;height:24px;background:#272c35;"></div>
<svg class="a" style="left:1650px;top:751px;" width="14" height="14" viewBox="0 0 16 16"><path d="M6.5 3.5l4 4.5-4 4.5" fill="none" stroke="#a4a7ab" stroke-width="1.8"/></svg>
<div class="t" style="left:1664px;top:748.30px;font-size:15px;color:#dcdddf;font-weight:700;letter-spacing:0.225px;">Material</div>
<div class="a" style="left:1650px;top:769px;width:254px;height:24px;background:#40444d;border-radius:2px"></div>
<svg class="a" style="left:1747px;top:773px;" width="16" height="16" viewBox="0 0 16 16"><circle cx="8" cy="8" r="5.2" fill="none" stroke="#e0e0e0" stroke-width="2"/></svg>
<div class="t" style="left:1769px;top:772.30px;font-size:15px;color:#dcdddf;font-weight:700;letter-spacing:-0.300px;">Node</div>
<div class="a" style="left:1650px;top:793px;width:254px;height:24px;background:#272c35;"></div>
<svg class="a" style="left:1650px;top:799px;" width="14" height="14" viewBox="0 0 16 16"><path d="M6.5 3.5l4 4.5-4 4.5" fill="none" stroke="#a4a7ab" stroke-width="1.8"/></svg>
<div class="t" style="left:1664px;top:796.30px;font-size:15px;color:#dcdddf;font-weight:700;letter-spacing:-0.911px;">Process</div>
<div class="a" style="left:1650px;top:817px;width:254px;height:24px;background:#272c35;"></div>
<svg class="a" style="left:1650px;top:823px;" width="14" height="14" viewBox="0 0 16 16"><path d="M6.5 3.5l4 4.5-4 4.5" fill="none" stroke="#a4a7ab" stroke-width="1.8"/></svg>
<div class="t" style="left:1664px;top:820.30px;font-size:15px;color:#dcdddf;font-weight:700;letter-spacing:-0.251px;">Editor Description</div>
<div class="t" style="left:1658px;top:847.30px;font-size:15px;color:#b9bbbe;letter-spacing:-0.257px;">Script</div>
<div class="t" style="left:1801px;top:847.30px;font-size:15px;color:#dcdddf;letter-spacing:-0.362px;">&lt;пусто&gt;</div>
<svg class="a" style="left:1883px;top:850px;" width="16" height="16" viewBox="0 0 16 16"><path d="M4.5 6.5l3.5 3.5 3.5-3.5" fill="none" stroke="#e0e0e0" stroke-width="1.8"/></svg>
<div class="a" style="left:1656px;top:875px;width:242px;height:29px;background:#2c313a;border-radius:3px"></div>
<svg class="a" style="left:1662px;top:882px;" width="16" height="16" viewBox="0 0 16 16"><path d="M7 1h2v6h6v2H9v6H7V9H1V7h6z" fill="#e0e0e0"/></svg>
<div class="t" style="left:1710px;top:882.30px;font-size:15px;color:#cdcfd2;letter-spacing:-0.076px;">Добавить метаданные</div>
</body></html>
